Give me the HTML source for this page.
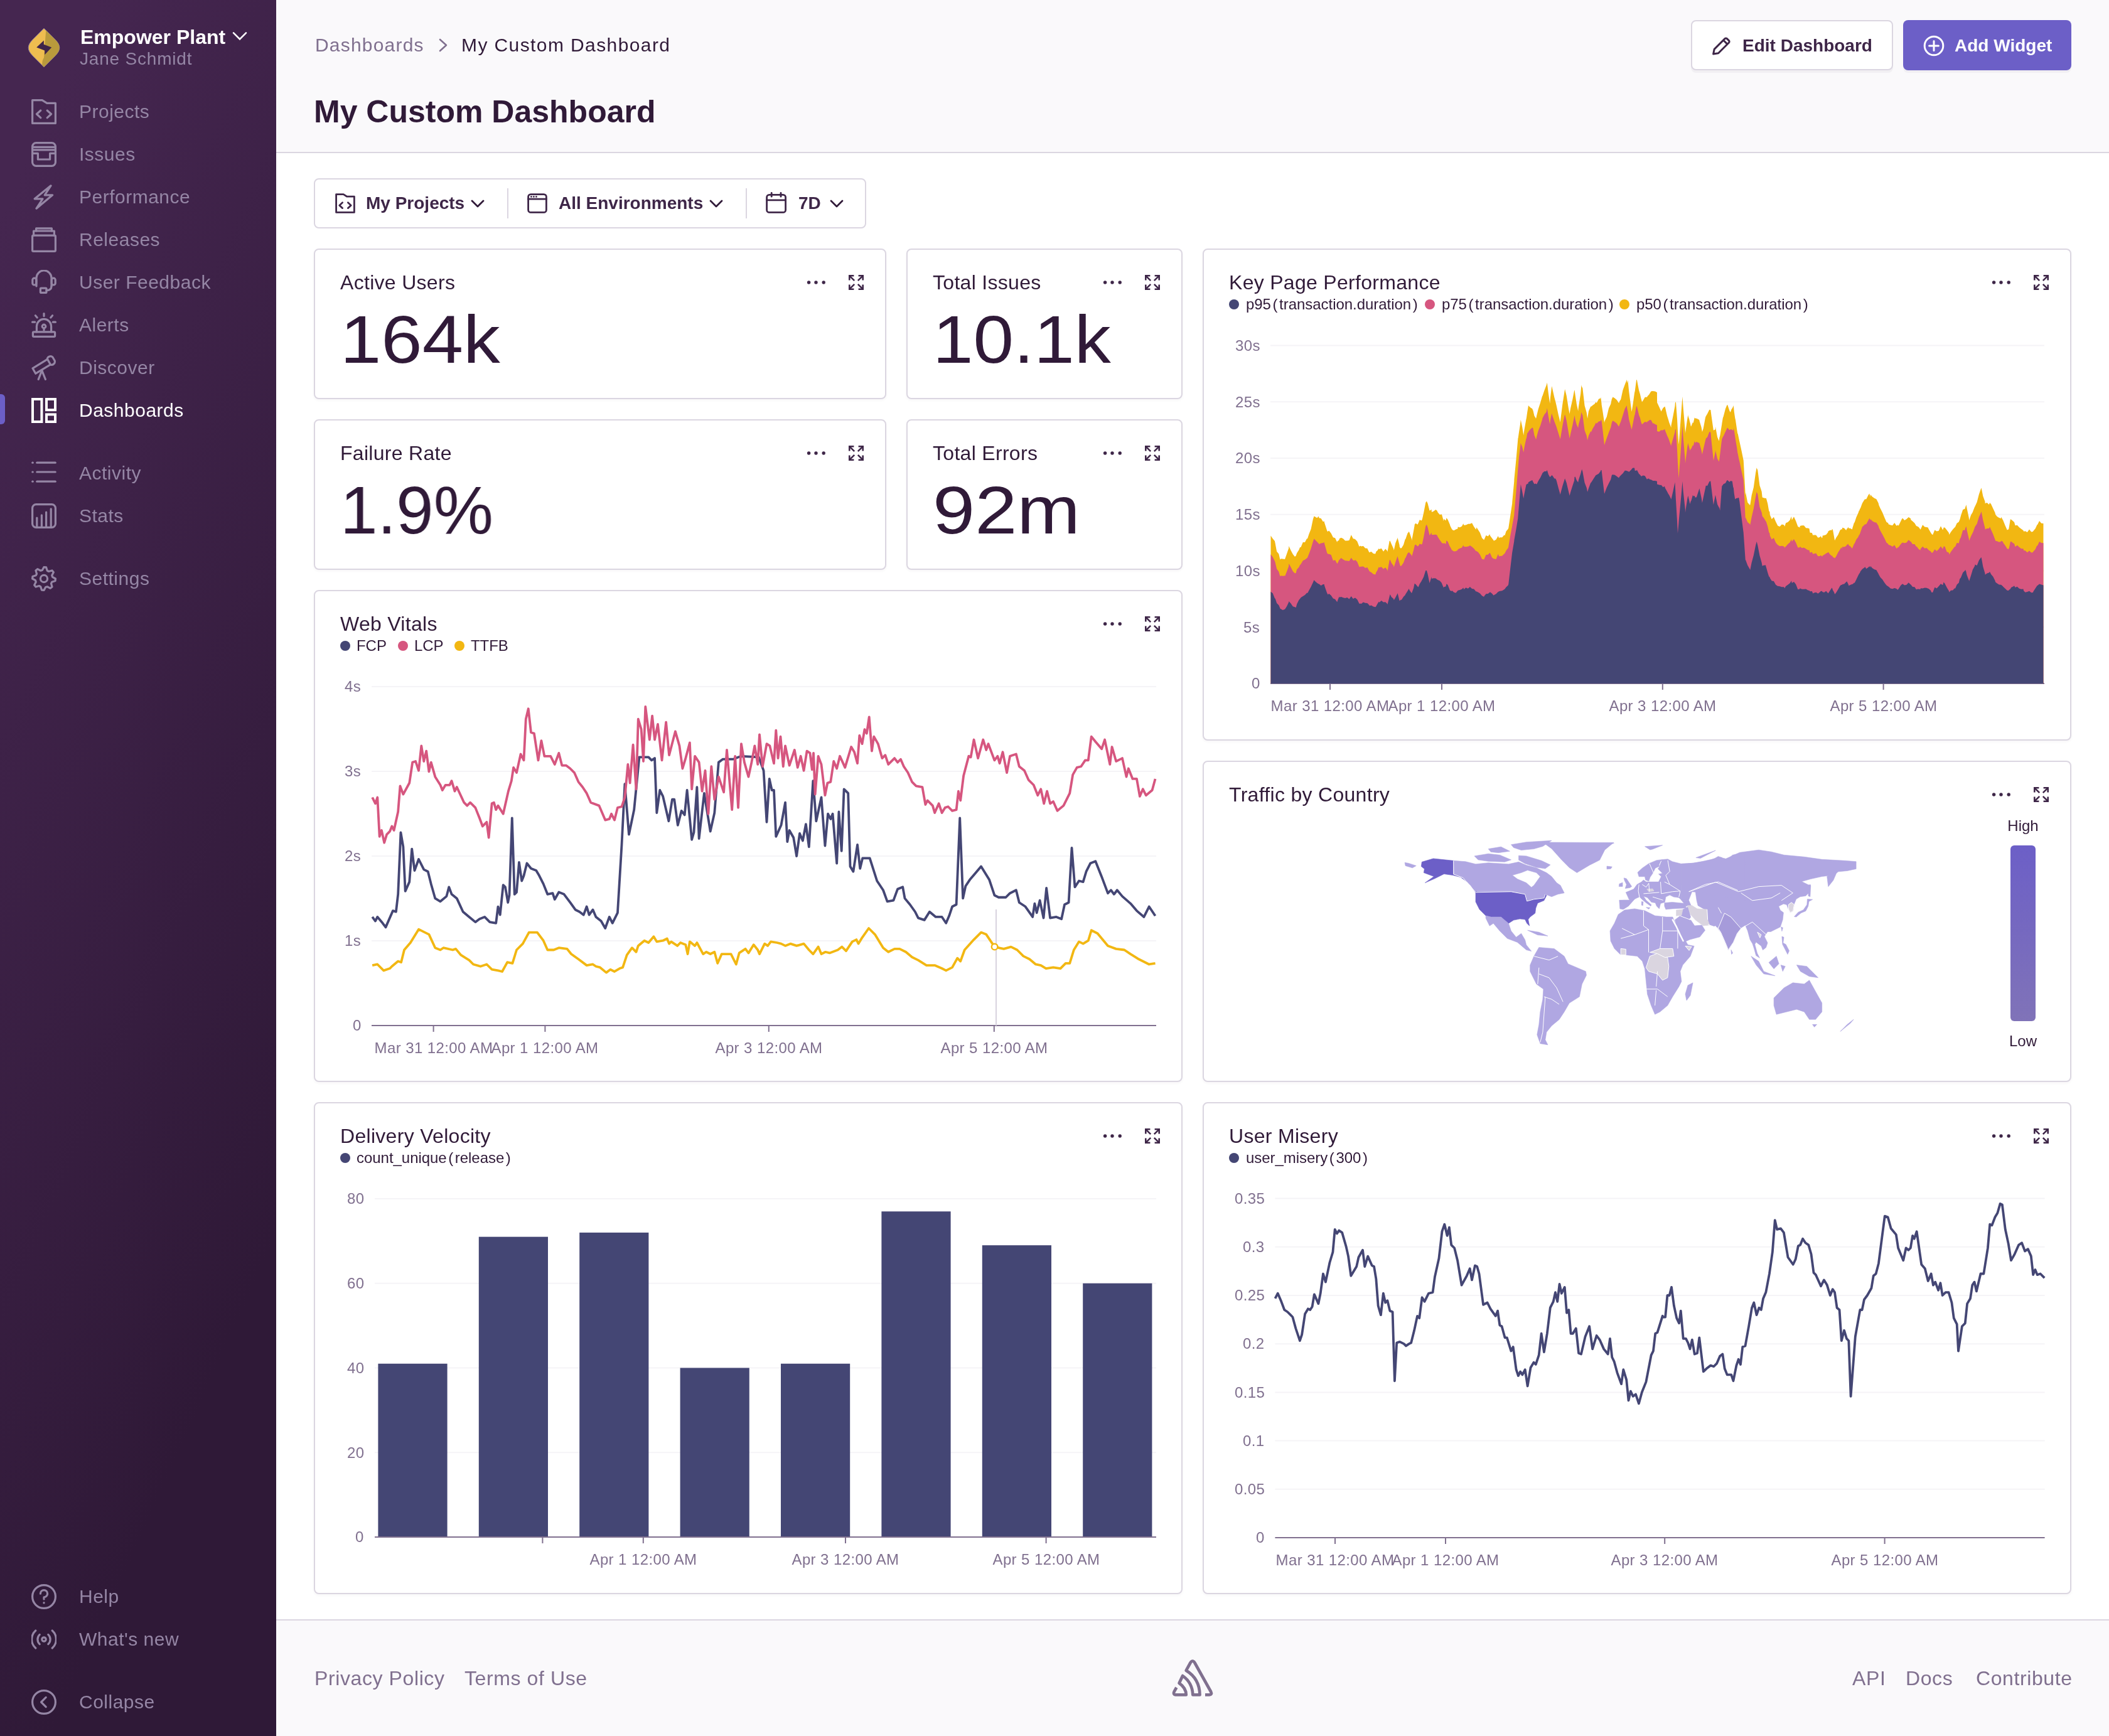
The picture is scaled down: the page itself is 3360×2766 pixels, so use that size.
<!DOCTYPE html>
<html><head><meta charset="utf-8"><style>
@media (min-width: 2000px) { html { zoom: 2; } }
html, body { margin:0; padding:0; }
body { width:1680px; height:1383px; position:relative; overflow:hidden; background:#FFFFFF; font-family:"Liberation Sans", sans-serif; -webkit-font-smoothing:antialiased; }
.t { will-change:transform; }
.t { position:absolute; white-space:nowrap; line-height:1; }
svg { display:block; }
</style></head><body>
<div style="position:absolute;left:0;top:0;width:220px;height:1383px;overflow:hidden;"><div style="position:absolute;left:0;top:0;width:220px;height:1800px;background:linear-gradient(294.17deg,#2f1937 35.57%,#452650 92.42%,#452650 92.42%);"></div></div>
<svg style="position:absolute;left:22px;top:22px;" width="26" height="32" viewBox="0 0 26 32"><defs><pattern id="dith" width="2" height="2" patternUnits="userSpaceOnUse"><rect width="2" height="2" fill="#6a4a5a"/><rect width="1" height="1" fill="#f0b72a"/><rect x="1" y="1" width="1" height="1" fill="#f0b72a"/></pattern></defs><path d="M13 0.6 L4 9.6 Q0.6 13 0.6 16 Q0.6 19 4 22.4 L13 31.4 L22 22.4 Q25.4 19 25.4 16 Q25.4 13 22 9.6 Z" fill="#EEBD50" stroke="#8a79a0" stroke-width="0.5"/><path d="M14.6 2.2 L22 9.6 Q25.4 13 25.4 16 Q25.4 19 22 22.4 L13 31.4 L11.6 30 Q11.4 26 13 24 Z" fill="#b99a3c"/><path d="M7.1 15.8 L12.9 10.3 V13.4 L19.1 15.8 L13.6 21.6 V18.3 Z" fill="#3f2449"/></svg>
<div class="t" style="left:63.90px;top:21.36px;font-size:16px;color:#FFFFFF;font-weight:700;">Empower Plant</div>
<svg style="position:absolute;left:185px;top:25px;" width="12" height="8" viewBox="0 0 12 8"><path d="M1 1.2 L6 6.2 L11 1.2" fill="none" stroke="#fff" stroke-width="1.3" stroke-linecap="round"/></svg>
<div class="t" style="left:63.50px;top:40.05px;font-size:14px;color:#9586A5;letter-spacing:0.4px;">Jane Schmidt</div>
<svg style="position:absolute;left:25px;top:79px;" width="20" height="20" viewBox="0 0 20 20"><g fill="none" stroke="#9586A5" stroke-width="1.6" stroke-linecap="round" stroke-linejoin="round"><path d="M0.8 0.8 H8.6 L12.4 3.2 H19.2 V19.2 H0.8 Z"/><path d="M7.4 9 L4.2 11.9 L7.4 14.8"/><path d="M12.6 9 L15.8 11.9 L12.6 14.8"/></g></svg>
<div class="t" style="left:63.00px;top:81.60px;font-size:15px;color:#9586A5;letter-spacing:0.25px;">Projects</div>
<svg style="position:absolute;left:25px;top:113px;" width="20" height="20" viewBox="0 0 20 20"><g fill="none" stroke="#9586A5" stroke-width="1.6" stroke-linecap="round" stroke-linejoin="round"><rect x="0.8" y="0.8" width="18.4" height="18.4" rx="3"/><path d="M1 4.2 H19"/><path d="M1 6.4 H19"/><path d="M1 9.2 H5.2 V14 H14.8 V9.2 H19"/></g></svg>
<div class="t" style="left:63.00px;top:115.60px;font-size:15px;color:#9586A5;letter-spacing:0.25px;">Issues</div>
<svg style="position:absolute;left:25px;top:147px;" width="20" height="20" viewBox="0 0 20 20"><g fill="none" stroke="#9586A5" stroke-width="1.6" stroke-linecap="round" stroke-linejoin="round"><path d="M15.5 0.9 L2.6 11.4 L9 11.4 L4 19.1 L16.8 8.4 L10.6 8.4 Z"/></g></svg>
<div class="t" style="left:63.00px;top:149.60px;font-size:15px;color:#9586A5;letter-spacing:0.25px;">Performance</div>
<svg style="position:absolute;left:25px;top:181px;" width="20" height="20" viewBox="0 0 20 20"><g fill="none" stroke="#9586A5" stroke-width="1.6" stroke-linecap="round" stroke-linejoin="round"><path d="M3.8 3 V0.9 H16.2 V3"/><path d="M1.8 6.6 V3 H18.2 V6.6"/><rect x="0.8" y="6.6" width="18.4" height="12.6" rx="0.8"/></g></svg>
<div class="t" style="left:63.00px;top:183.60px;font-size:15px;color:#9586A5;letter-spacing:0.25px;">Releases</div>
<svg style="position:absolute;left:25px;top:215px;" width="20" height="20" viewBox="0 0 20 20"><g fill="none" stroke="#9586A5" stroke-width="1.6" stroke-linecap="round" stroke-linejoin="round"><path d="M4 13 V6.5 A6 6 0 0 1 16 6.5 V13"/><rect x="0.9" y="6.6" width="3" height="5.4" rx="1.4"/><rect x="16.1" y="6.6" width="3" height="5.4" rx="1.4"/><path d="M16 13 Q16 16.3 12 16.3"/><rect x="7.2" y="14.6" width="4.8" height="3.6" rx="0.6"/></g></svg>
<div class="t" style="left:63.00px;top:217.60px;font-size:15px;color:#9586A5;letter-spacing:0.25px;">User Feedback</div>
<svg style="position:absolute;left:25px;top:249px;" width="20" height="20" viewBox="0 0 20 20"><g fill="none" stroke="#9586A5" stroke-width="1.6" stroke-linecap="round" stroke-linejoin="round"><rect x="1.2" y="15.4" width="17.6" height="3.8" rx="0.8"/><path d="M4.2 15.4 V11 A5.8 5.8 0 0 1 15.8 11 V15.4"/><circle cx="10" cy="11" r="1.4"/><path d="M10 12.4 V14"/><path d="M10 0.8 V2.8"/><path d="M3.2 2.4 L4.6 4"/><path d="M16.8 2.4 L15.4 4"/><path d="M0.8 7.6 H2.8"/><path d="M17.2 7.6 H19.2"/></g></svg>
<div class="t" style="left:63.00px;top:251.60px;font-size:15px;color:#9586A5;letter-spacing:0.25px;">Alerts</div>
<svg style="position:absolute;left:25px;top:283px;" width="20" height="20" viewBox="0 0 20 20"><g fill="none" stroke="#9586A5" stroke-width="1.6" stroke-linecap="round" stroke-linejoin="round"><path d="M1 10.4 L12.8 3.2 L15.2 7.4 L3.4 14.6 Z"/><path d="M12.6 3 A2.6 2.6 0 0 1 17 1.6 L18.6 4.4 A2.6 2.6 0 0 1 15.6 7.6"/><path d="M8.4 12.2 L5.6 19.2"/><path d="M8.4 12.2 L11.2 19.2"/></g></svg>
<div class="t" style="left:63.00px;top:285.60px;font-size:15px;color:#9586A5;letter-spacing:0.25px;">Discover</div>
<svg style="position:absolute;left:25px;top:317px;" width="20" height="20" viewBox="0 0 20 20"><g fill="none" stroke="#FFFFFF" stroke-width="2"><rect x="1" y="1" width="7.2" height="18"/><rect x="12" y="1" width="7" height="8.6"/><rect x="12" y="13.2" width="7" height="5.8"/></g></svg>
<div class="t" style="left:63.00px;top:319.60px;font-size:15px;color:#FFFFFF;letter-spacing:0.25px;">Dashboards</div>
<svg style="position:absolute;left:25px;top:367px;" width="20" height="20" viewBox="0 0 20 20"><g fill="none" stroke="#9586A5" stroke-width="1.6" stroke-linecap="round" stroke-linejoin="round"><path d="M0.9 1.6 H1.1"/><path d="M4.4 1.6 H19.1"/><path d="M0.9 9 H1.1"/><path d="M4.4 9 H19.1"/><path d="M0.9 16.6 H1.1"/><path d="M4.4 16.6 H19.1"/></g></svg>
<div class="t" style="left:63.00px;top:369.60px;font-size:15px;color:#9586A5;letter-spacing:0.25px;">Activity</div>
<svg style="position:absolute;left:25px;top:401px;" width="20" height="20" viewBox="0 0 20 20"><g fill="none" stroke="#9586A5" stroke-width="1.6" stroke-linecap="round" stroke-linejoin="round"><rect x="0.8" y="0.8" width="18.4" height="18.4" rx="3"/><path d="M4.4 18.6 V11.6"/><path d="M8.2 18.6 V9.4"/><path d="M11.8 18.6 V7"/><path d="M15.6 18.6 V4.4"/></g></svg>
<div class="t" style="left:63.00px;top:403.60px;font-size:15px;color:#9586A5;letter-spacing:0.25px;">Stats</div>
<svg style="position:absolute;left:25px;top:451px;" width="20" height="20" viewBox="0 0 20 20"><g fill="none" stroke="#9586A5" stroke-width="1.6" stroke-linecap="round" stroke-linejoin="round"><path d="M10.00 0.80 L11.79 0.98 L12.64 3.63 L13.83 4.26 L16.51 3.49 L17.65 4.89 L16.37 7.36 L16.77 8.65 L19.20 10.00 L19.02 11.79 L16.37 12.64 L15.74 13.83 L16.51 16.51 L15.11 17.65 L12.64 16.37 L11.35 16.77 L10.00 19.20 L8.21 19.02 L7.36 16.37 L6.17 15.74 L3.49 16.51 L2.35 15.11 L3.63 12.64 L3.23 11.35 L0.80 10.00 L0.98 8.21 L3.63 7.36 L4.26 6.17 L3.49 3.49 L4.89 2.35 L7.36 3.63 L8.65 3.23 Z"/><circle cx="10" cy="10" r="2.8"/></g></svg>
<div class="t" style="left:63.00px;top:453.60px;font-size:15px;color:#9586A5;letter-spacing:0.25px;">Settings</div>
<svg style="position:absolute;left:25px;top:1262px;" width="20" height="20" viewBox="0 0 20 20"><g fill="none" stroke="#9586A5" stroke-width="1.6" stroke-linecap="round" stroke-linejoin="round"><circle cx="10" cy="10" r="9.2"/><path d="M7.2 7.6 A2.8 2.8 0 1 1 10 10.4 V12"/><path d="M10 14.8 V15"/></g></svg>
<div class="t" style="left:63.00px;top:1264.60px;font-size:15px;color:#9586A5;letter-spacing:0.25px;">Help</div>
<svg style="position:absolute;left:25px;top:1296px;" width="20" height="20" viewBox="0 0 20 20"><g fill="none" stroke="#9586A5" stroke-width="1.6" stroke-linecap="round" stroke-linejoin="round"><circle cx="10" cy="10" r="1.6"/><path d="M6.6 6.2 A5.2 5.2 0 0 0 6.6 13.8"/><path d="M13.4 6.2 A5.2 5.2 0 0 1 13.4 13.8"/><path d="M3.4 3 A9.4 9.4 0 0 0 3.4 17"/><path d="M16.6 3 A9.4 9.4 0 0 1 16.6 17"/></g></svg>
<div class="t" style="left:63.00px;top:1298.60px;font-size:15px;color:#9586A5;letter-spacing:0.25px;">What's new</div>
<svg style="position:absolute;left:25px;top:1346px;" width="20" height="20" viewBox="0 0 20 20"><g fill="none" stroke="#9586A5" stroke-width="1.6" stroke-linecap="round" stroke-linejoin="round"><circle cx="10" cy="10" r="9.2"/><path d="M11.6 6.2 L7.8 10 L11.6 13.8"/></g></svg>
<div class="t" style="left:63.00px;top:1348.60px;font-size:15px;color:#9586A5;letter-spacing:0.25px;">Collapse</div>
<div style="position:absolute;left:0px;top:314px;width:4px;height:24px;background:#6C5FC7;border-radius:0 3px 3px 0;"></div>
<div style="position:absolute;left:220px;top:0px;width:1460px;height:121px;background:#FAF9FB;border-bottom:1px solid #DBD6E1;"></div>
<div class="t" style="left:251.00px;top:28.60px;font-size:15px;color:#80708F;letter-spacing:0.6px;">Dashboards</div>
<svg style="position:absolute;left:348px;top:30px;" width="10" height="12" viewBox="0 0 10 12"><path d="M2.5 1.5 L7.5 6 L2.5 10.5" fill="none" stroke="#80708F" stroke-width="1.3" stroke-linecap="round" stroke-linejoin="round"/></svg>
<div class="t" style="left:367.60px;top:28.60px;font-size:15px;color:#301A38;letter-spacing:0.7px;">My Custom Dashboard</div>
<div class="t" style="left:249.90px;top:76.34px;font-size:25px;color:#301A38;font-weight:700;">My Custom Dashboard</div>
<div style="position:absolute;left:1347px;top:16px;width:159px;height:38px;background:#fff;border:1px solid #DBD6E1;border-radius:4px;box-shadow:0 2px 0 rgba(37,11,54,0.04);"></div>
<svg style="position:absolute;left:1363px;top:28px;" width="17" height="17" viewBox="0 0 17 17"><path d="M1.8 15 L2.6 11.2 L11 2.8 A1.2 1.2 0 0 1 12.7 2.8 L14.2 4.3 A1.2 1.2 0 0 1 14.2 6 L5.8 14.4 Z M9.8 4 L13 7.2" fill="none" stroke="#3E2648" stroke-width="1.5" stroke-linejoin="round"/></svg>
<div class="t" style="left:1388.00px;top:29.55px;font-size:14px;color:#3E2648;font-weight:700;">Edit Dashboard</div>
<div style="position:absolute;left:1516px;top:16px;width:134px;height:40px;background:#6C5FC7;border-radius:4px;box-shadow:0 2px 0 rgba(37,11,54,0.04);"></div>
<svg style="position:absolute;left:1532px;top:28px;" width="17" height="17" viewBox="0 0 17 17"><circle cx="8.5" cy="8.5" r="7.4" fill="none" stroke="#fff" stroke-width="1.5"/><path d="M8.5 4.8 V12.2 M4.8 8.5 H12.2" stroke="#fff" stroke-width="1.5" stroke-linecap="round"/></svg>
<div class="t" style="left:1557.00px;top:29.55px;font-size:14px;color:#FFFFFF;font-weight:700;">Add Widget</div>
<div style="position:absolute;left:250px;top:142px;width:438px;height:38px;background:#fff;border:1px solid #DBD6E1;border-radius:4px;"></div>
<svg style="position:absolute;left:267px;top:154px;" width="16" height="16" viewBox="0 0 16 16"><g fill="none" stroke="#3E2648" stroke-width="1.4" stroke-linejoin="round" stroke-linecap="round"><path d="M0.8 0.8 H6.6 L9.4 2.6 H15.2 V15.2 H0.8 Z"/><path d="M5.8 7.4 L3.4 9.6 L5.8 11.8"/><path d="M10.2 7.4 L12.6 9.6 L10.2 11.8"/></g></svg>
<div class="t" style="left:291.50px;top:155.15px;font-size:14px;color:#3E2648;font-weight:700;">My Projects</div>
<svg style="position:absolute;left:375px;top:159px;" width="11" height="7" viewBox="0 0 11 7"><path d="M1 1 L5.5 5.5 L10 1" fill="none" stroke="#301A38" stroke-width="1.4" stroke-linecap="round" stroke-linejoin="round"/></svg>
<div style="position:absolute;left:404px;top:150px;width:1px;height:24px;background:#DBD6E1;"></div>
<svg style="position:absolute;left:420px;top:154px;" width="16" height="16" viewBox="0 0 16 16"><g fill="none" stroke="#3E2648" stroke-width="1.4" stroke-linejoin="round" stroke-linecap="round"><rect x="0.8" y="0.8" width="14.4" height="14.4" rx="2"/><path d="M0.8 4.6 H15.2"/></g><g fill="#3E2648"><circle cx="3.2" cy="2.7" r="0.7"/><circle cx="5.2" cy="2.7" r="0.7"/><circle cx="7.2" cy="2.7" r="0.7"/></g></svg>
<div class="t" style="left:445.00px;top:155.15px;font-size:14px;color:#3E2648;font-weight:700;">All Environments</div>
<svg style="position:absolute;left:565px;top:159px;" width="11" height="7" viewBox="0 0 11 7"><path d="M1 1 L5.5 5.5 L10 1" fill="none" stroke="#301A38" stroke-width="1.4" stroke-linecap="round" stroke-linejoin="round"/></svg>
<div style="position:absolute;left:594px;top:150px;width:1px;height:24px;background:#DBD6E1;"></div>
<svg style="position:absolute;left:610px;top:153px;" width="17" height="17" viewBox="0 0 17 17"><g fill="none" stroke="#3E2648" stroke-width="1.4" stroke-linejoin="round" stroke-linecap="round"><rect x="0.8" y="2.2" width="15" height="14" rx="2"/><path d="M0.8 6.4 H15.8"/><path d="M4.6 0.7 V3.6"/><path d="M12 0.7 V3.6"/></g></svg>
<div class="t" style="left:636.00px;top:155.15px;font-size:14px;color:#3E2648;font-weight:700;">7D</div>
<svg style="position:absolute;left:661px;top:159px;" width="11" height="7" viewBox="0 0 11 7"><path d="M1 1 L5.5 5.5 L10 1" fill="none" stroke="#301A38" stroke-width="1.4" stroke-linecap="round" stroke-linejoin="round"/></svg>
<div style="position:absolute;left:250px;top:198px;width:454px;height:118px;background:#fff;border:1px solid #DBD6E1;border-radius:4px;box-shadow:0 1px 2px rgba(43,29,56,0.04);"></div>
<div class="t" style="left:271.00px;top:216.96px;font-size:16px;color:#301A38;letter-spacing:0.15px;">Active Users</div>
<svg style="position:absolute;left:643px;top:223px;overflow:visible;" width="14" height="4" viewBox="0 0 14 4"><g fill="#3E2648"><circle cx="0.6" cy="2" r="1.35" transform="translate(0.7 0)"/><circle cx="7" cy="2" r="1.35"/><circle cx="13.7" cy="2" r="1.35" transform="translate(-0.6 0)"/></g></svg>
<svg style="position:absolute;left:676px;top:219px;" width="12" height="12" viewBox="0 0 12 12"><g fill="none" stroke="#3E2648" stroke-width="1.3" stroke-linecap="butt" stroke-linejoin="miter"><path d="M0.65 4.2 V0.65 H4.2"/><path d="M0.9 0.9 L4.6 4.6"/><path d="M7.8 0.65 H11.35 V4.2"/><path d="M11.1 0.9 L7.4 4.6"/><path d="M0.65 7.8 V11.35 H4.2"/><path d="M0.9 11.1 L4.6 7.4"/><path d="M7.8 11.35 H11.35 V7.8"/><path d="M11.1 11.1 L7.4 7.4"/></g></svg>
<div style="position:absolute;left:722px;top:198px;width:218px;height:118px;background:#fff;border:1px solid #DBD6E1;border-radius:4px;box-shadow:0 1px 2px rgba(43,29,56,0.04);"></div>
<div class="t" style="left:743.00px;top:216.96px;font-size:16px;color:#301A38;letter-spacing:0.15px;">Total Issues</div>
<svg style="position:absolute;left:879px;top:223px;overflow:visible;" width="14" height="4" viewBox="0 0 14 4"><g fill="#3E2648"><circle cx="0.6" cy="2" r="1.35" transform="translate(0.7 0)"/><circle cx="7" cy="2" r="1.35"/><circle cx="13.7" cy="2" r="1.35" transform="translate(-0.6 0)"/></g></svg>
<svg style="position:absolute;left:912px;top:219px;" width="12" height="12" viewBox="0 0 12 12"><g fill="none" stroke="#3E2648" stroke-width="1.3" stroke-linecap="butt" stroke-linejoin="miter"><path d="M0.65 4.2 V0.65 H4.2"/><path d="M0.9 0.9 L4.6 4.6"/><path d="M7.8 0.65 H11.35 V4.2"/><path d="M11.1 0.9 L7.4 4.6"/><path d="M0.65 7.8 V11.35 H4.2"/><path d="M0.9 11.1 L4.6 7.4"/><path d="M7.8 11.35 H11.35 V7.8"/><path d="M11.1 11.1 L7.4 7.4"/></g></svg>
<div style="position:absolute;left:250px;top:334px;width:454px;height:118px;background:#fff;border:1px solid #DBD6E1;border-radius:4px;box-shadow:0 1px 2px rgba(43,29,56,0.04);"></div>
<div class="t" style="left:271.00px;top:352.96px;font-size:16px;color:#301A38;letter-spacing:0.15px;">Failure Rate</div>
<svg style="position:absolute;left:643px;top:359px;overflow:visible;" width="14" height="4" viewBox="0 0 14 4"><g fill="#3E2648"><circle cx="0.6" cy="2" r="1.35" transform="translate(0.7 0)"/><circle cx="7" cy="2" r="1.35"/><circle cx="13.7" cy="2" r="1.35" transform="translate(-0.6 0)"/></g></svg>
<svg style="position:absolute;left:676px;top:355px;" width="12" height="12" viewBox="0 0 12 12"><g fill="none" stroke="#3E2648" stroke-width="1.3" stroke-linecap="butt" stroke-linejoin="miter"><path d="M0.65 4.2 V0.65 H4.2"/><path d="M0.9 0.9 L4.6 4.6"/><path d="M7.8 0.65 H11.35 V4.2"/><path d="M11.1 0.9 L7.4 4.6"/><path d="M0.65 7.8 V11.35 H4.2"/><path d="M0.9 11.1 L4.6 7.4"/><path d="M7.8 11.35 H11.35 V7.8"/><path d="M11.1 11.1 L7.4 7.4"/></g></svg>
<div style="position:absolute;left:722px;top:334px;width:218px;height:118px;background:#fff;border:1px solid #DBD6E1;border-radius:4px;box-shadow:0 1px 2px rgba(43,29,56,0.04);"></div>
<div class="t" style="left:743.00px;top:352.96px;font-size:16px;color:#301A38;letter-spacing:0.15px;">Total Errors</div>
<svg style="position:absolute;left:879px;top:359px;overflow:visible;" width="14" height="4" viewBox="0 0 14 4"><g fill="#3E2648"><circle cx="0.6" cy="2" r="1.35" transform="translate(0.7 0)"/><circle cx="7" cy="2" r="1.35"/><circle cx="13.7" cy="2" r="1.35" transform="translate(-0.6 0)"/></g></svg>
<svg style="position:absolute;left:912px;top:355px;" width="12" height="12" viewBox="0 0 12 12"><g fill="none" stroke="#3E2648" stroke-width="1.3" stroke-linecap="butt" stroke-linejoin="miter"><path d="M0.65 4.2 V0.65 H4.2"/><path d="M0.9 0.9 L4.6 4.6"/><path d="M7.8 0.65 H11.35 V4.2"/><path d="M11.1 0.9 L7.4 4.6"/><path d="M0.65 7.8 V11.35 H4.2"/><path d="M0.9 11.1 L4.6 7.4"/><path d="M7.8 11.35 H11.35 V7.8"/><path d="M11.1 11.1 L7.4 7.4"/></g></svg>
<div style="position:absolute;left:958px;top:198px;width:690px;height:390px;background:#fff;border:1px solid #DBD6E1;border-radius:4px;box-shadow:0 1px 2px rgba(43,29,56,0.04);"></div>
<div class="t" style="left:979.00px;top:216.96px;font-size:16px;color:#301A38;letter-spacing:0.15px;">Key Page Performance</div>
<svg style="position:absolute;left:1587px;top:223px;overflow:visible;" width="14" height="4" viewBox="0 0 14 4"><g fill="#3E2648"><circle cx="0.6" cy="2" r="1.35" transform="translate(0.7 0)"/><circle cx="7" cy="2" r="1.35"/><circle cx="13.7" cy="2" r="1.35" transform="translate(-0.6 0)"/></g></svg>
<svg style="position:absolute;left:1620px;top:219px;" width="12" height="12" viewBox="0 0 12 12"><g fill="none" stroke="#3E2648" stroke-width="1.3" stroke-linecap="butt" stroke-linejoin="miter"><path d="M0.65 4.2 V0.65 H4.2"/><path d="M0.9 0.9 L4.6 4.6"/><path d="M7.8 0.65 H11.35 V4.2"/><path d="M11.1 0.9 L7.4 4.6"/><path d="M0.65 7.8 V11.35 H4.2"/><path d="M0.9 11.1 L4.6 7.4"/><path d="M7.8 11.35 H11.35 V7.8"/><path d="M11.1 11.1 L7.4 7.4"/></g></svg>
<div style="position:absolute;left:250px;top:470px;width:690px;height:390px;background:#fff;border:1px solid #DBD6E1;border-radius:4px;box-shadow:0 1px 2px rgba(43,29,56,0.04);"></div>
<div class="t" style="left:271.00px;top:488.96px;font-size:16px;color:#301A38;letter-spacing:0.15px;">Web Vitals</div>
<svg style="position:absolute;left:879px;top:495px;overflow:visible;" width="14" height="4" viewBox="0 0 14 4"><g fill="#3E2648"><circle cx="0.6" cy="2" r="1.35" transform="translate(0.7 0)"/><circle cx="7" cy="2" r="1.35"/><circle cx="13.7" cy="2" r="1.35" transform="translate(-0.6 0)"/></g></svg>
<svg style="position:absolute;left:912px;top:491px;" width="12" height="12" viewBox="0 0 12 12"><g fill="none" stroke="#3E2648" stroke-width="1.3" stroke-linecap="butt" stroke-linejoin="miter"><path d="M0.65 4.2 V0.65 H4.2"/><path d="M0.9 0.9 L4.6 4.6"/><path d="M7.8 0.65 H11.35 V4.2"/><path d="M11.1 0.9 L7.4 4.6"/><path d="M0.65 7.8 V11.35 H4.2"/><path d="M0.9 11.1 L4.6 7.4"/><path d="M7.8 11.35 H11.35 V7.8"/><path d="M11.1 11.1 L7.4 7.4"/></g></svg>
<div style="position:absolute;left:958px;top:606px;width:690px;height:254px;background:#fff;border:1px solid #DBD6E1;border-radius:4px;box-shadow:0 1px 2px rgba(43,29,56,0.04);"></div>
<div class="t" style="left:979.00px;top:624.96px;font-size:16px;color:#301A38;letter-spacing:0.15px;">Traffic by Country</div>
<svg style="position:absolute;left:1587px;top:631px;overflow:visible;" width="14" height="4" viewBox="0 0 14 4"><g fill="#3E2648"><circle cx="0.6" cy="2" r="1.35" transform="translate(0.7 0)"/><circle cx="7" cy="2" r="1.35"/><circle cx="13.7" cy="2" r="1.35" transform="translate(-0.6 0)"/></g></svg>
<svg style="position:absolute;left:1620px;top:627px;" width="12" height="12" viewBox="0 0 12 12"><g fill="none" stroke="#3E2648" stroke-width="1.3" stroke-linecap="butt" stroke-linejoin="miter"><path d="M0.65 4.2 V0.65 H4.2"/><path d="M0.9 0.9 L4.6 4.6"/><path d="M7.8 0.65 H11.35 V4.2"/><path d="M11.1 0.9 L7.4 4.6"/><path d="M0.65 7.8 V11.35 H4.2"/><path d="M0.9 11.1 L4.6 7.4"/><path d="M7.8 11.35 H11.35 V7.8"/><path d="M11.1 11.1 L7.4 7.4"/></g></svg>
<div style="position:absolute;left:250px;top:878px;width:690px;height:390px;background:#fff;border:1px solid #DBD6E1;border-radius:4px;box-shadow:0 1px 2px rgba(43,29,56,0.04);"></div>
<div class="t" style="left:271.00px;top:896.96px;font-size:16px;color:#301A38;letter-spacing:0.15px;">Delivery Velocity</div>
<svg style="position:absolute;left:879px;top:903px;overflow:visible;" width="14" height="4" viewBox="0 0 14 4"><g fill="#3E2648"><circle cx="0.6" cy="2" r="1.35" transform="translate(0.7 0)"/><circle cx="7" cy="2" r="1.35"/><circle cx="13.7" cy="2" r="1.35" transform="translate(-0.6 0)"/></g></svg>
<svg style="position:absolute;left:912px;top:899px;" width="12" height="12" viewBox="0 0 12 12"><g fill="none" stroke="#3E2648" stroke-width="1.3" stroke-linecap="butt" stroke-linejoin="miter"><path d="M0.65 4.2 V0.65 H4.2"/><path d="M0.9 0.9 L4.6 4.6"/><path d="M7.8 0.65 H11.35 V4.2"/><path d="M11.1 0.9 L7.4 4.6"/><path d="M0.65 7.8 V11.35 H4.2"/><path d="M0.9 11.1 L4.6 7.4"/><path d="M7.8 11.35 H11.35 V7.8"/><path d="M11.1 11.1 L7.4 7.4"/></g></svg>
<div style="position:absolute;left:958px;top:878px;width:690px;height:390px;background:#fff;border:1px solid #DBD6E1;border-radius:4px;box-shadow:0 1px 2px rgba(43,29,56,0.04);"></div>
<div class="t" style="left:979.00px;top:896.96px;font-size:16px;color:#301A38;letter-spacing:0.15px;">User Misery</div>
<svg style="position:absolute;left:1587px;top:903px;overflow:visible;" width="14" height="4" viewBox="0 0 14 4"><g fill="#3E2648"><circle cx="0.6" cy="2" r="1.35" transform="translate(0.7 0)"/><circle cx="7" cy="2" r="1.35"/><circle cx="13.7" cy="2" r="1.35" transform="translate(-0.6 0)"/></g></svg>
<svg style="position:absolute;left:1620px;top:899px;" width="12" height="12" viewBox="0 0 12 12"><g fill="none" stroke="#3E2648" stroke-width="1.3" stroke-linecap="butt" stroke-linejoin="miter"><path d="M0.65 4.2 V0.65 H4.2"/><path d="M0.9 0.9 L4.6 4.6"/><path d="M7.8 0.65 H11.35 V4.2"/><path d="M11.1 0.9 L7.4 4.6"/><path d="M0.65 7.8 V11.35 H4.2"/><path d="M0.9 11.1 L4.6 7.4"/><path d="M7.8 11.35 H11.35 V7.8"/><path d="M11.1 11.1 L7.4 7.4"/></g></svg>
<div class="t" style="left:271.00px;top:243.29px;font-size:54px;color:#301A38;transform:scaleX(1.088);transform-origin:0 0;">164k</div>
<div class="t" style="left:743.00px;top:243.29px;font-size:54px;color:#301A38;transform:scaleX(1.074);transform-origin:0 0;">10.1k</div>
<div class="t" style="left:271.00px;top:379.29px;font-size:54px;color:#301A38;transform:scaleX(0.99);transform-origin:0 0;">1.9%</div>
<div class="t" style="left:743.00px;top:379.29px;font-size:54px;color:#301A38;transform:scaleX(1.118);transform-origin:0 0;">92m</div>
<div style="position:absolute;left:979px;top:238.5px;width:8px;height:8px;background:#444674;border-radius:50%;"></div>
<div class="t" style="left:992.30px;top:236.54px;font-size:12px;color:#301A38;letter-spacing:-0.02px;">p95<span style="margin:0 1.3px">(</span>transaction.duration<span style="margin:0 1.3px">)</span></div>
<div style="position:absolute;left:1135px;top:238.5px;width:8px;height:8px;background:#D6567F;border-radius:50%;"></div>
<div class="t" style="left:1148.50px;top:236.54px;font-size:12px;color:#301A38;letter-spacing:-0.02px;">p75<span style="margin:0 1.3px">(</span>transaction.duration<span style="margin:0 1.3px">)</span></div>
<div style="position:absolute;left:1290px;top:238.5px;width:8px;height:8px;background:#F2B712;border-radius:50%;"></div>
<div class="t" style="left:1303.50px;top:236.54px;font-size:12px;color:#301A38;letter-spacing:-0.02px;">p50<span style="margin:0 1.3px">(</span>transaction.duration<span style="margin:0 1.3px">)</span></div>
<div class="t" style="right:676.30px;top:269.44px;font-size:12px;color:#80708F;letter-spacing:0.2px;">30s</div>
<div class="t" style="right:676.30px;top:314.31px;font-size:12px;color:#80708F;letter-spacing:0.2px;">25s</div>
<div class="t" style="right:676.30px;top:359.18px;font-size:12px;color:#80708F;letter-spacing:0.2px;">20s</div>
<div class="t" style="right:676.30px;top:404.04px;font-size:12px;color:#80708F;letter-spacing:0.2px;">15s</div>
<div class="t" style="right:676.30px;top:448.91px;font-size:12px;color:#80708F;letter-spacing:0.2px;">10s</div>
<div class="t" style="right:676.30px;top:493.78px;font-size:12px;color:#80708F;letter-spacing:0.2px;">5s</div>
<div class="t" style="right:676.30px;top:538.64px;font-size:12px;color:#80708F;letter-spacing:0.2px;">0</div>
<div class="t" style="left:759.50px;width:600px;text-align:center;top:556.74px;font-size:12px;color:#80708F;letter-spacing:0.2px;">Mar 31 12:00 AM</div>
<div class="t" style="left:848.50px;width:600px;text-align:center;top:556.74px;font-size:12px;color:#80708F;letter-spacing:0.2px;">Apr 1 12:00 AM</div>
<div class="t" style="left:1024.40px;width:600px;text-align:center;top:556.74px;font-size:12px;color:#80708F;letter-spacing:0.2px;">Apr 3 12:00 AM</div>
<div class="t" style="left:1200.30px;width:600px;text-align:center;top:556.74px;font-size:12px;color:#80708F;letter-spacing:0.2px;">Apr 5 12:00 AM</div>
<svg style="position:absolute;left:0px;top:0px;pointer-events:none;" width="1680" height="1383" viewBox="0 0 1680 1383"><path d="M1012.00 275.30 H1628.50" stroke="#F5F4F7" stroke-width="1"/><path d="M1012.00 320.17 H1628.50" stroke="#F5F4F7" stroke-width="1"/><path d="M1012.00 365.03 H1628.50" stroke="#F5F4F7" stroke-width="1"/><path d="M1012.00 409.90 H1628.50" stroke="#F5F4F7" stroke-width="1"/><path d="M1012.00 454.77 H1628.50" stroke="#F5F4F7" stroke-width="1"/><path d="M1012.00 499.63 H1628.50" stroke="#F5F4F7" stroke-width="1"/><path d="M1012.00 544.50 H1628.50" stroke="#80708F" stroke-width="1"/><path d="M1059.50 544.50 V549.50" stroke="#80708F" stroke-width="1"/><path d="M1148.50 544.50 V549.50" stroke="#80708F" stroke-width="1"/><path d="M1324.40 544.50 V549.50" stroke="#80708F" stroke-width="1"/><path d="M1500.30 544.50 V549.50" stroke="#80708F" stroke-width="1"/><path d="M1012.25 426.27 L1012.25 426.04 L1012.25 426.68 L1012.25 426.79 L1013.85 429.12 L1015.45 430.97 L1015.99 433.58 L1015.99 433.73 L1015.99 433.77 L1017.05 439.42 L1018.66 441.21 L1019.73 445.85 L1019.73 445.44 L1019.73 445.86 L1020.26 445.17 L1021.86 445.25 L1023.47 445.47 L1023.48 445.63 L1023.48 446.21 L1023.48 445.62 L1025.07 441.15 L1026.47 437.05 L1026.47 437.20 L1026.47 437.84 L1026.67 435.05 L1028.27 438.48 L1029.88 441.49 L1031.48 443.51 L1032.46 442.68 L1032.46 443.19 L1032.46 442.43 L1033.08 440.58 L1034.69 438.12 L1035.46 436.12 L1035.46 436.10 L1035.46 436.09 L1036.29 435.90 L1037.89 432.04 L1039.49 432.02 L1041.10 428.93 L1041.45 429.39 L1041.45 429.49 L1041.45 429.35 L1042.70 425.51 L1044.30 421.55 L1045.91 413.72 L1046.69 411.38 L1046.69 411.25 L1046.69 411.19 L1047.51 411.60 L1049.11 412.64 L1050.43 411.26 L1050.43 410.84 L1050.43 411.18 L1050.71 412.62 L1052.32 412.99 L1053.92 415.57 L1054.92 415.26 L1054.92 415.71 L1054.92 416.00 L1055.52 417.87 L1057.12 422.82 L1057.92 423.72 L1057.92 423.35 L1057.92 423.18 L1058.73 422.82 L1060.33 424.84 L1061.93 428.13 L1063.54 428.67 L1065.14 432.01 L1065.41 430.61 L1065.41 430.90 L1065.41 431.12 L1066.74 430.28 L1066.90 429.38 L1066.90 429.48 L1066.90 429.13 L1068.34 428.37 L1069.95 429.11 L1071.55 430.69 L1073.15 430.74 L1074.76 430.52 L1076.36 426.12 L1077.96 429.26 L1078.88 429.14 L1078.88 429.58 L1078.88 429.48 L1079.56 429.60 L1081.17 431.40 L1082.77 435.49 L1083.38 434.87 L1083.38 435.19 L1083.38 434.75 L1084.37 435.28 L1085.98 434.97 L1087.58 436.69 L1089.18 436.83 L1090.78 440.29 L1090.86 440.11 L1090.86 439.62 L1090.86 440.05 L1092.39 439.53 L1093.99 440.97 L1095.59 441.29 L1096.10 439.84 L1096.10 439.90 L1096.10 439.56 L1097.20 438.63 L1098.35 436.88 L1098.35 436.66 L1098.35 437.18 L1098.80 437.47 L1100.40 436.89 L1102.00 439.36 L1103.61 437.30 L1105.09 438.82 L1105.09 439.34 L1105.09 439.17 L1105.21 439.79 L1106.81 431.11 L1107.33 430.72 L1107.33 430.86 L1107.33 430.86 L1108.42 433.55 L1110.02 436.96 L1110.33 438.30 L1110.33 438.10 L1110.33 438.47 L1111.62 432.65 L1113.22 428.77 L1113.32 427.77 L1113.32 428.53 L1113.32 428.53 L1114.82 434.36 L1114.83 435.36 L1115.57 436.91 L1115.57 436.79 L1116.43 436.68 L1118.03 433.95 L1119.31 429.63 L1119.63 429.49 L1121.24 424.83 L1122.31 423.62 L1122.31 423.49 L1122.31 423.28 L1122.84 424.51 L1124.44 429.25 L1124.56 430.39 L1124.56 430.82 L1124.56 430.86 L1126.05 422.93 L1126.80 418.72 L1126.80 418.54 L1126.80 418.04 L1127.65 416.88 L1129.25 417.92 L1129.80 416.78 L1130.85 414.11 L1132.46 414.78 L1132.79 413.82 L1132.79 414.20 L1132.79 414.31 L1134.06 408.64 L1135.66 400.33 L1136.53 399.10 L1136.53 398.99 L1136.53 399.48 L1137.27 401.03 L1138.78 406.87 L1138.78 406.40 L1138.78 406.52 L1138.87 406.85 L1140.28 405.83 L1140.28 405.14 L1140.28 405.30 L1140.47 407.97 L1142.07 407.31 L1143.68 405.99 L1144.77 406.89 L1144.77 407.14 L1144.77 406.89 L1145.28 408.16 L1146.88 410.00 L1148.49 409.69 L1148.51 410.04 L1148.51 409.72 L1148.51 409.93 L1150.01 415.22 L1150.01 415.40 L1150.01 415.56 L1150.09 413.43 L1151.69 414.70 L1152.26 412.46 L1152.26 412.65 L1152.26 412.61 L1153.29 414.00 L1154.90 417.71 L1155.25 418.97 L1156.50 421.46 L1156.75 421.46 L1156.75 421.99 L1158.10 422.60 L1159.71 421.81 L1161.24 421.14 L1161.24 421.05 L1161.24 420.75 L1161.31 419.73 L1162.91 420.07 L1164.51 419.31 L1165.74 417.05 L1165.74 417.27 L1165.74 417.38 L1166.12 418.34 L1167.72 418.29 L1169.32 417.49 L1170.23 417.23 L1170.23 417.29 L1170.23 417.38 L1170.92 417.35 L1172.53 416.60 L1174.13 419.60 L1175.73 421.82 L1176.22 420.17 L1176.22 420.05 L1176.22 420.17 L1177.34 421.91 L1178.94 424.36 L1180.54 428.66 L1182.14 430.09 L1182.21 430.31 L1182.21 429.80 L1182.21 429.97 L1183.75 426.52 L1185.35 427.26 L1186.70 425.45 L1186.70 425.14 L1186.70 425.69 L1186.95 426.62 L1188.56 428.86 L1189.69 430.19 L1189.69 429.57 L1189.69 430.64 L1190.16 430.71 L1191.76 429.84 L1193.36 426.95 L1194.19 428.91 L1194.19 428.40 L1194.19 428.37 L1194.97 428.09 L1196.57 428.17 L1198.17 426.20 L1198.68 426.45 L1198.68 426.27 L1198.68 426.73 L1199.78 423.20 L1201.38 421.40 L1201.67 420.45 L1201.67 419.89 L1201.67 420.51 L1202.98 411.75 L1204.58 401.13 L1204.67 399.40 L1204.67 399.36 L1206.17 383.30 L1206.19 381.88 L1207.79 365.51 L1209.16 349.87 L1209.16 349.44 L1209.39 348.57 L1209.91 344.91 L1211.00 338.03 L1211.41 334.40 L1211.41 334.26 L1211.41 334.49 L1212.60 340.16 L1213.65 346.77 L1213.65 346.57 L1213.65 346.79 L1214.20 342.63 L1215.80 333.57 L1215.90 333.32 L1216.65 328.17 L1217.40 323.64 L1217.41 323.01 L1219.01 324.60 L1220.61 325.57 L1221.14 327.03 L1221.14 326.72 L1221.14 326.68 L1222.21 331.29 L1223.39 333.14 L1223.39 333.73 L1223.82 332.50 L1224.14 330.91 L1225.42 325.76 L1227.02 320.88 L1228.63 315.27 L1228.63 315.50 L1228.63 315.69 L1228.63 315.75 L1230.23 310.96 L1231.83 306.86 L1232.37 304.96 L1232.37 305.19 L1232.37 304.56 L1233.43 313.31 L1234.62 321.48 L1234.62 321.44 L1234.62 321.51 L1235.04 316.38 L1236.12 307.62 L1236.12 306.89 L1236.12 307.47 L1236.64 309.78 L1238.24 316.93 L1239.11 320.03 L1239.85 323.10 L1241.45 330.65 L1242.85 336.31 L1242.85 336.15 L1242.85 336.69 L1243.05 334.75 L1244.65 322.30 L1246.26 311.86 L1246.60 309.93 L1246.60 310.51 L1246.60 310.12 L1247.86 315.30 L1249.46 325.27 L1250.34 330.04 L1250.34 329.59 L1250.34 329.34 L1251.07 325.23 L1252.67 318.24 L1254.09 310.91 L1254.09 311.19 L1254.27 310.62 L1254.83 314.78 L1255.87 321.64 L1257.08 327.36 L1257.08 327.06 L1257.08 327.57 L1257.48 324.09 L1259.08 313.93 L1259.78 306.15 L1259.78 307.00 L1260.07 308.07 L1260.68 309.25 L1262.29 323.08 L1263.89 328.78 L1264.57 333.48 L1264.57 333.60 L1264.57 333.43 L1265.49 327.51 L1267.09 323.86 L1267.56 323.80 L1267.56 323.13 L1267.56 323.82 L1268.70 322.93 L1270.30 321.76 L1271.31 320.10 L1271.31 319.65 L1271.31 320.49 L1271.90 321.06 L1273.50 317.89 L1275.05 317.26 L1275.11 316.12 L1275.80 321.80 L1275.80 322.33 L1276.71 327.87 L1278.04 336.99 L1278.04 336.49 L1278.04 336.48 L1278.31 335.34 L1279.92 332.03 L1281.52 325.27 L1283.12 321.93 L1284.03 317.33 L1284.03 317.79 L1284.03 317.84 L1284.72 316.30 L1286.33 317.21 L1287.93 318.58 L1289.53 321.08 L1290.02 319.95 L1290.02 319.70 L1290.02 319.91 L1291.14 318.08 L1292.74 310.76 L1294.34 306.33 L1295.94 302.36 L1296.01 304.58 L1296.01 305.19 L1296.76 302.96 L1297.55 311.33 L1299.15 323.55 L1299.76 327.82 L1299.76 328.18 L1300.75 321.95 L1302.00 312.97 L1302.36 311.54 L1303.50 302.86 L1303.50 302.50 L1303.96 302.81 L1305.56 311.06 L1306.50 314.17 L1307.16 317.17 L1307.99 320.23 L1307.99 320.23 L1308.77 319.12 L1310.37 316.33 L1311.97 316.36 L1312.49 315.50 L1313.58 314.39 L1313.98 313.76 L1315.18 311.77 L1316.78 311.48 L1316.98 311.57 L1318.38 311.75 L1319.97 312.57 L1319.97 312.77 L1319.97 311.97 L1319.99 316.56 L1320.00 320.65 L1320.00 320.99 L1320.00 320.57 L1321.59 324.03 L1322.99 327.17 L1323.19 327.91 L1324.79 324.94 L1325.99 323.95 L1325.99 323.70 L1325.99 323.76 L1326.40 324.23 L1328.00 331.26 L1328.98 334.23 L1329.60 336.50 L1331.21 340.59 L1331.23 339.16 L1331.23 338.46 L1331.23 339.03 L1332.81 331.05 L1334.23 323.54 L1334.41 321.04 L1334.97 320.05 L1334.97 320.16 L1336.01 334.03 L1336.47 342.61 L1337.22 354.34 L1337.22 353.95 L1337.62 350.24 L1339.22 328.58 L1340.22 315.88 L1340.22 316.08 L1340.22 315.80 L1340.82 324.55 L1342.43 343.88 L1342.46 345.82 L1342.46 345.69 L1342.46 345.25 L1344.03 334.24 L1344.71 330.13 L1344.71 330.52 L1344.71 331.23 L1345.63 334.05 L1346.21 336.76 L1346.21 336.22 L1346.95 339.81 L1347.23 339.52 L1348.45 336.34 L1348.84 337.08 L1349.95 332.29 L1349.95 333.00 L1350.44 333.23 L1351.45 333.38 L1352.04 333.62 L1353.65 334.51 L1353.69 334.97 L1353.69 335.19 L1353.69 335.16 L1355.25 340.31 L1355.94 343.91 L1355.94 344.53 L1355.94 344.14 L1356.85 341.35 L1358.45 332.71 L1358.93 331.33 L1358.93 331.50 L1358.93 331.44 L1360.06 329.64 L1361.66 326.35 L1362.68 326.66 L1362.68 326.07 L1362.68 326.67 L1363.26 331.14 L1364.87 342.48 L1364.92 342.67 L1364.92 343.37 L1364.92 342.83 L1366.42 342.12 L1366.42 342.32 L1366.42 342.46 L1366.47 339.80 L1368.07 348.36 L1369.42 351.37 L1369.42 351.25 L1369.67 348.81 L1370.16 347.05 L1371.28 340.04 L1371.66 337.73 L1371.66 337.37 L1372.41 333.04 L1372.88 331.70 L1374.48 325.58 L1375.41 323.42 L1375.41 322.96 L1375.41 323.24 L1376.09 322.38 L1377.69 327.25 L1378.40 328.51 L1379.29 325.95 L1379.90 325.21 L1380.65 323.80 L1380.89 322.90 L1381.40 328.16 L1382.14 333.10 L1382.50 334.64 L1383.64 342.34 L1384.10 345.27 L1384.39 345.79 L1385.14 349.36 L1385.70 351.82 L1387.30 359.29 L1388.88 367.06 L1388.88 367.67 L1388.88 367.85 L1388.91 367.66 L1390.38 394.59 L1390.38 395.12 L1390.38 394.42 L1390.51 392.29 L1392.11 400.19 L1393.72 402.25 L1394.12 402.30 L1394.12 402.58 L1394.12 402.56 L1395.32 394.61 L1396.92 388.22 L1398.52 376.73 L1399.37 372.20 L1399.37 372.45 L1399.37 372.83 L1400.13 374.56 L1401.73 386.76 L1403.33 391.60 L1403.86 396.47 L1403.86 395.87 L1403.86 396.30 L1404.94 396.64 L1406.54 397.04 L1406.85 396.81 L1406.85 396.95 L1406.85 396.57 L1408.14 401.42 L1409.10 407.04 L1409.74 407.88 L1409.85 409.69 L1409.85 409.97 L1411.35 413.57 L1412.95 411.82 L1414.55 415.63 L1415.84 418.19 L1415.84 418.23 L1415.84 418.16 L1416.16 418.92 L1417.76 419.45 L1419.36 417.78 L1420.96 418.17 L1421.83 419.51 L1421.83 418.48 L1421.83 418.90 L1422.57 416.68 L1424.17 416.05 L1425.77 414.39 L1427.07 411.25 L1427.07 412.17 L1427.07 412.09 L1427.38 414.33 L1428.98 411.60 L1430.58 415.11 L1432.18 419.48 L1433.79 420.24 L1433.81 419.68 L1433.81 419.31 L1433.81 418.95 L1435.39 418.60 L1436.99 418.60 L1438.59 420.59 L1440.20 420.74 L1441.29 421.13 L1441.29 420.97 L1441.29 421.33 L1441.80 424.43 L1443.40 424.55 L1444.29 426.91 L1444.29 425.97 L1444.29 426.15 L1445.01 426.30 L1446.61 426.30 L1448.21 428.33 L1449.81 427.82 L1450.28 426.97 L1451.42 428.79 L1451.78 427.75 L1451.78 426.75 L1453.02 426.44 L1454.62 425.98 L1456.23 423.98 L1456.27 423.27 L1456.27 423.15 L1456.27 423.21 L1457.83 422.41 L1459.26 422.39 L1459.43 421.31 L1460.01 422.11 L1461.03 427.81 L1461.51 430.48 L1461.51 430.55 L1461.51 430.68 L1462.64 428.36 L1464.24 425.94 L1465.84 422.24 L1466.75 421.70 L1466.75 421.48 L1467.45 421.69 L1467.50 420.36 L1469.05 420.78 L1470.65 422.53 L1471.24 420.79 L1471.24 421.26 L1471.24 421.64 L1472.25 419.83 L1472.74 420.84 L1473.86 420.86 L1475.46 421.69 L1475.74 420.17 L1475.74 420.37 L1477.06 416.12 L1477.23 416.52 L1478.67 412.17 L1480.27 408.59 L1480.98 406.44 L1480.98 407.09 L1481.73 405.05 L1481.87 405.25 L1483.47 400.82 L1485.08 398.20 L1485.47 397.75 L1485.47 397.75 L1485.47 397.74 L1486.68 397.58 L1488.28 394.37 L1489.21 393.09 L1489.21 393.50 L1489.88 395.91 L1489.96 393.95 L1491.49 395.79 L1493.09 396.91 L1494.69 397.68 L1496.30 400.74 L1496.70 402.33 L1496.70 402.83 L1496.70 402.44 L1497.90 405.08 L1499.50 408.24 L1501.10 412.14 L1502.71 415.91 L1504.19 416.79 L1504.19 417.41 L1504.19 417.10 L1504.31 417.65 L1505.91 418.22 L1507.52 418.60 L1509.12 416.49 L1510.72 418.93 L1511.67 418.40 L1511.67 418.18 L1511.67 417.96 L1512.32 418.83 L1513.93 415.68 L1514.67 414.09 L1514.67 413.98 L1514.67 414.03 L1515.53 412.78 L1517.13 414.48 L1518.74 413.53 L1520.34 411.95 L1521.94 413.04 L1522.16 413.91 L1522.16 414.20 L1522.16 414.14 L1523.54 415.22 L1525.15 416.73 L1526.65 419.19 L1526.75 418.96 L1528.35 419.87 L1529.64 421.57 L1529.64 422.00 L1529.96 421.57 L1531.56 418.12 L1533.16 419.74 L1534.76 419.98 L1535.63 420.24 L1535.63 420.29 L1535.63 419.93 L1536.37 421.44 L1537.97 424.31 L1538.63 425.19 L1538.63 425.99 L1538.63 425.40 L1539.57 426.07 L1541.17 422.30 L1542.78 423.31 L1544.38 422.86 L1545.98 419.16 L1547.59 422.22 L1548.36 420.08 L1548.36 420.66 L1548.36 420.19 L1549.19 420.23 L1550.79 422.27 L1552.39 424.36 L1552.85 426.41 L1552.85 426.31 L1552.85 425.70 L1554.00 423.90 L1555.60 421.71 L1557.20 419.95 L1557.35 420.11 L1558.81 416.91 L1560.41 415.77 L1561.09 413.95 L1561.09 414.60 L1561.09 414.31 L1562.01 410.74 L1563.61 406.03 L1565.22 405.40 L1565.58 404.07 L1566.33 402.03 L1566.33 402.43 L1566.82 405.12 L1568.42 412.63 L1568.58 414.47 L1568.58 414.54 L1568.58 414.46 L1570.03 410.34 L1571.57 407.75 L1571.63 407.36 L1573.07 403.62 L1573.07 403.76 L1573.23 403.52 L1574.83 399.98 L1576.44 393.80 L1578.04 389.26 L1578.31 388.75 L1578.31 388.75 L1578.31 388.57 L1579.64 395.28 L1581.25 399.61 L1581.31 401.25 L1581.31 401.05 L1581.31 400.98 L1582.85 400.48 L1584.45 402.00 L1585.05 400.39 L1585.05 399.92 L1585.05 400.47 L1586.05 401.67 L1587.66 405.15 L1589.26 408.54 L1589.54 409.90 L1589.54 409.79 L1589.54 409.91 L1590.86 411.55 L1592.46 412.46 L1594.03 413.02 L1594.07 411.79 L1595.53 414.40 L1595.53 414.21 L1595.67 414.57 L1597.27 418.64 L1598.88 422.28 L1600.02 421.66 L1600.02 421.33 L1600.02 421.97 L1600.48 419.47 L1601.52 413.12 L1601.52 413.70 L1602.08 413.90 L1603.68 415.22 L1604.52 415.96 L1605.29 418.59 L1606.89 418.42 L1608.49 420.12 L1610.10 421.42 L1611.70 422.46 L1612.00 423.20 L1612.00 423.41 L1612.00 423.43 L1613.30 423.12 L1614.90 424.01 L1616.51 421.81 L1618.11 423.77 L1619.49 423.52 L1619.49 423.51 L1619.49 423.38 L1619.71 422.96 L1621.32 421.07 L1622.49 418.58 L1622.49 418.25 L1622.49 417.95 L1622.92 418.22 L1624.52 415.04 L1626.12 416.89 L1627.73 416.94 L1627.73 416.69 L1627.73 416.61 L1627.73 417.22 L1627.73 544.5 L1012.25 544.5 Z" fill="#F2B712"/><path d="M1012.25 441.27 L1012.25 441.05 L1012.25 441.50 L1012.25 441.65 L1013.85 443.80 L1015.45 446.99 L1015.99 448.50 L1015.99 448.80 L1015.99 448.84 L1017.05 453.25 L1018.66 455.32 L1019.73 459.29 L1019.73 458.99 L1019.73 459.30 L1020.26 458.62 L1021.86 458.92 L1023.47 458.65 L1023.48 458.98 L1023.48 459.47 L1023.48 459.29 L1025.07 455.30 L1026.47 451.36 L1026.47 451.65 L1026.47 451.98 L1026.67 449.03 L1028.27 451.89 L1029.88 455.14 L1031.48 456.74 L1032.46 456.39 L1032.46 456.58 L1032.46 455.78 L1033.08 453.60 L1034.69 451.82 L1035.46 450.25 L1035.46 450.42 L1035.46 450.31 L1036.29 449.35 L1037.89 446.65 L1039.49 445.91 L1041.10 444.62 L1041.45 444.19 L1041.45 444.44 L1041.45 444.35 L1042.70 441.20 L1044.30 436.95 L1045.91 431.47 L1046.69 429.40 L1046.69 429.61 L1046.69 429.10 L1047.51 429.99 L1049.11 431.57 L1050.43 432.99 L1050.43 432.96 L1050.43 433.07 L1050.71 433.49 L1052.32 432.72 L1053.92 432.56 L1054.92 431.95 L1054.92 432.15 L1054.92 432.44 L1055.52 434.70 L1057.12 440.56 L1057.92 441.55 L1057.92 441.22 L1057.92 441.38 L1058.73 441.36 L1060.33 442.05 L1061.93 446.66 L1063.54 446.18 L1065.14 449.04 L1065.41 448.88 L1065.41 448.96 L1065.41 448.86 L1066.74 446.03 L1066.90 445.96 L1066.90 445.93 L1066.90 445.94 L1068.34 444.44 L1069.95 445.78 L1071.55 446.66 L1073.15 446.71 L1074.76 446.95 L1076.36 444.36 L1077.96 446.44 L1078.88 446.45 L1078.88 446.79 L1078.88 446.73 L1079.56 446.06 L1081.17 447.64 L1082.77 451.58 L1083.38 451.58 L1083.38 451.75 L1083.38 451.45 L1084.37 451.33 L1085.98 451.31 L1087.58 452.48 L1089.18 451.96 L1090.78 454.84 L1090.86 454.89 L1090.86 454.90 L1090.86 455.07 L1092.39 455.99 L1093.99 457.40 L1095.59 457.69 L1096.10 456.45 L1096.10 456.25 L1096.10 456.18 L1097.20 454.32 L1098.35 451.45 L1098.35 452.02 L1098.35 451.91 L1098.80 452.13 L1100.40 451.67 L1102.00 453.25 L1103.61 452.10 L1105.09 453.94 L1105.09 454.50 L1105.09 453.99 L1105.21 455.29 L1106.81 446.54 L1107.33 445.80 L1107.33 445.78 L1107.33 445.88 L1108.42 448.48 L1110.02 450.66 L1110.33 451.75 L1110.33 451.51 L1110.33 451.97 L1111.62 447.91 L1113.22 443.25 L1113.32 442.91 L1113.32 443.71 L1113.32 443.43 L1114.82 448.73 L1114.83 448.84 L1115.57 451.30 L1115.57 451.06 L1116.43 450.65 L1118.03 448.25 L1119.31 444.71 L1119.63 444.49 L1121.24 440.84 L1122.31 439.98 L1122.31 439.88 L1122.31 439.79 L1122.84 440.48 L1124.44 442.43 L1124.56 443.04 L1124.56 443.58 L1124.56 443.52 L1126.05 438.26 L1126.80 435.05 L1126.80 434.91 L1126.80 434.67 L1127.65 433.76 L1129.25 435.20 L1129.80 434.94 L1130.85 433.25 L1132.46 433.79 L1132.79 433.29 L1132.79 433.67 L1132.79 433.73 L1134.06 427.96 L1135.66 419.20 L1136.53 417.80 L1136.53 417.75 L1136.53 418.20 L1137.27 420.03 L1138.78 426.44 L1138.78 425.98 L1138.78 426.06 L1138.87 426.52 L1140.28 424.38 L1140.28 424.21 L1140.28 423.93 L1140.47 425.95 L1142.07 426.02 L1143.68 425.92 L1144.77 426.32 L1144.77 426.61 L1144.77 426.48 L1145.28 427.61 L1146.88 430.16 L1148.49 432.39 L1148.51 432.40 L1148.51 432.07 L1148.51 432.49 L1150.01 433.14 L1150.01 433.44 L1150.01 433.41 L1150.09 432.45 L1151.69 433.40 L1152.26 430.25 L1152.26 430.67 L1152.26 430.58 L1153.29 431.44 L1154.90 435.35 L1155.25 435.71 L1156.50 438.30 L1156.75 437.98 L1156.75 438.38 L1158.10 439.29 L1159.71 439.08 L1161.24 438.30 L1161.24 438.26 L1161.24 438.10 L1161.31 437.57 L1162.91 436.91 L1164.51 436.23 L1165.74 434.27 L1165.74 434.50 L1165.74 434.50 L1166.12 435.54 L1167.72 435.65 L1169.32 435.32 L1170.23 434.98 L1170.23 435.15 L1170.23 435.30 L1170.92 434.51 L1172.53 435.67 L1174.13 437.04 L1175.73 439.14 L1176.22 438.80 L1176.22 438.94 L1176.22 439.08 L1177.34 439.79 L1178.94 441.92 L1180.54 445.43 L1182.14 445.80 L1182.21 446.09 L1182.21 445.75 L1182.21 445.64 L1183.75 441.96 L1185.35 441.92 L1186.70 440.36 L1186.70 440.12 L1186.70 440.62 L1186.95 440.60 L1188.56 444.22 L1189.69 445.02 L1189.69 444.45 L1189.69 445.22 L1190.16 445.13 L1191.76 445.55 L1193.36 441.43 L1194.19 443.56 L1194.19 443.45 L1194.19 443.25 L1194.97 443.03 L1196.57 442.84 L1198.17 441.21 L1198.68 440.82 L1198.68 440.73 L1198.68 440.83 L1199.78 438.62 L1201.38 436.47 L1201.67 435.33 L1201.67 435.18 L1201.67 435.28 L1202.98 427.52 L1204.58 418.98 L1204.67 418.47 L1204.67 418.31 L1206.17 410.35 L1206.19 409.45 L1207.79 391.01 L1209.16 373.72 L1209.16 373.48 L1209.39 371.32 L1209.91 364.88 L1211.00 356.42 L1211.41 352.75 L1211.41 352.98 L1211.41 353.11 L1212.60 356.04 L1213.65 360.40 L1213.65 360.09 L1213.65 360.37 L1214.20 356.79 L1215.80 349.17 L1215.90 349.61 L1216.65 344.96 L1217.40 344.53 L1217.41 343.98 L1219.01 341.94 L1220.61 340.62 L1221.14 341.06 L1221.14 341.01 L1221.14 340.92 L1222.21 346.69 L1223.39 349.58 L1223.39 350.13 L1223.82 349.33 L1224.14 347.58 L1225.42 342.97 L1227.02 339.12 L1228.63 333.84 L1228.63 333.52 L1228.63 333.76 L1228.63 333.37 L1230.23 330.28 L1231.83 328.28 L1232.37 325.19 L1232.37 325.40 L1232.37 325.03 L1233.43 331.67 L1234.62 338.16 L1234.62 337.80 L1234.62 337.90 L1235.04 334.50 L1236.12 329.20 L1236.12 328.53 L1236.12 329.24 L1236.64 331.12 L1238.24 335.88 L1239.11 338.18 L1239.85 340.08 L1241.45 345.25 L1242.85 349.71 L1242.85 349.94 L1242.85 350.16 L1243.05 348.84 L1244.65 339.38 L1246.26 331.08 L1246.60 330.30 L1246.60 330.70 L1246.60 330.31 L1247.86 335.16 L1249.46 344.48 L1250.34 349.42 L1250.34 349.10 L1250.34 349.07 L1251.07 345.57 L1252.67 338.74 L1254.09 331.90 L1254.09 331.76 L1254.27 330.81 L1254.83 334.20 L1255.87 338.12 L1257.08 340.91 L1257.08 340.88 L1257.08 340.94 L1257.48 338.41 L1259.08 332.32 L1259.78 327.74 L1259.78 328.59 L1260.07 329.37 L1260.68 330.71 L1262.29 342.85 L1263.89 347.09 L1264.57 350.86 L1264.57 350.79 L1264.57 350.60 L1265.49 346.98 L1267.09 343.62 L1267.56 344.00 L1267.56 343.66 L1267.56 343.95 L1268.70 341.45 L1270.30 338.89 L1271.31 336.65 L1271.31 336.24 L1271.31 336.96 L1271.90 337.33 L1273.50 335.77 L1275.05 335.47 L1275.11 334.34 L1275.80 335.00 L1275.80 335.25 L1276.71 342.70 L1278.04 354.77 L1278.04 354.49 L1278.04 354.66 L1278.31 353.68 L1279.92 349.03 L1281.52 344.60 L1283.12 340.55 L1284.03 336.22 L1284.03 336.50 L1284.03 336.34 L1284.72 335.13 L1286.33 336.14 L1287.93 337.38 L1289.53 339.89 L1290.02 338.67 L1290.02 338.78 L1290.02 338.53 L1291.14 335.69 L1292.74 330.81 L1294.34 325.61 L1295.94 323.04 L1296.01 324.43 L1296.01 324.70 L1296.76 328.24 L1297.55 333.92 L1299.15 339.99 L1299.76 342.12 L1299.76 342.32 L1300.75 337.43 L1302.00 331.12 L1302.36 330.13 L1303.50 323.80 L1303.50 323.65 L1303.96 323.83 L1305.56 330.63 L1306.50 332.99 L1307.16 335.89 L1307.99 338.10 L1307.99 338.08 L1308.77 337.36 L1310.37 336.02 L1311.97 336.42 L1312.49 335.67 L1313.58 335.14 L1313.98 334.55 L1315.18 334.62 L1316.78 337.64 L1316.98 337.04 L1318.38 337.98 L1319.97 338.64 L1319.97 339.07 L1319.97 338.28 L1319.99 341.07 L1320.00 343.89 L1320.00 344.06 L1320.00 343.56 L1321.59 344.06 L1322.99 342.73 L1323.19 342.78 L1324.79 342.71 L1325.99 341.89 L1325.99 341.55 L1325.99 341.69 L1326.40 342.87 L1328.00 347.06 L1328.98 349.00 L1329.60 350.57 L1331.21 355.39 L1331.23 354.62 L1331.23 354.34 L1331.23 354.68 L1332.81 349.20 L1334.23 344.12 L1334.41 342.35 L1334.97 341.97 L1334.97 341.96 L1336.01 358.55 L1336.47 368.12 L1337.22 381.16 L1337.22 381.03 L1337.62 376.19 L1339.22 353.96 L1340.22 339.24 L1340.22 339.39 L1340.22 338.92 L1340.82 348.55 L1342.43 367.10 L1342.46 369.56 L1342.46 369.50 L1342.46 369.27 L1344.03 356.81 L1344.71 352.40 L1344.71 353.18 L1344.71 353.39 L1345.63 356.60 L1346.21 359.21 L1346.21 358.76 L1346.95 357.53 L1347.23 357.35 L1348.45 354.62 L1348.84 355.21 L1349.95 350.98 L1349.95 351.85 L1350.44 352.85 L1351.45 351.88 L1352.04 352.41 L1353.65 352.82 L1353.69 352.90 L1353.69 353.18 L1353.69 352.97 L1355.25 358.59 L1355.94 362.00 L1355.94 362.28 L1355.94 361.89 L1356.85 357.84 L1358.45 351.06 L1358.93 349.28 L1358.93 349.40 L1358.93 349.25 L1360.06 348.27 L1361.66 344.04 L1362.68 344.41 L1362.68 344.33 L1362.68 344.68 L1363.26 350.87 L1364.87 366.22 L1364.92 366.92 L1364.92 367.32 L1364.92 366.94 L1366.42 359.98 L1366.42 360.43 L1366.42 360.39 L1366.47 358.57 L1368.07 365.55 L1369.42 367.88 L1369.42 367.47 L1369.67 365.78 L1370.16 361.87 L1371.28 352.55 L1371.66 349.84 L1371.66 349.76 L1372.41 348.08 L1372.88 347.38 L1374.48 343.88 L1375.41 341.99 L1375.41 341.64 L1375.41 341.78 L1376.09 340.80 L1377.69 342.60 L1378.40 342.18 L1379.29 342.05 L1379.90 342.62 L1380.65 343.03 L1380.89 341.18 L1381.40 343.06 L1382.14 347.74 L1382.50 350.31 L1383.64 357.06 L1384.10 360.47 L1384.39 361.81 L1385.14 365.56 L1385.70 367.77 L1387.30 375.35 L1388.88 382.76 L1388.88 383.11 L1388.88 383.42 L1388.91 383.52 L1390.38 413.40 L1390.38 413.91 L1390.38 413.20 L1390.51 412.25 L1392.11 415.98 L1393.72 417.43 L1394.12 418.08 L1394.12 418.15 L1394.12 418.28 L1395.32 412.02 L1396.92 405.10 L1398.52 396.03 L1399.37 391.50 L1399.37 392.03 L1399.37 392.14 L1400.13 393.67 L1401.73 404.03 L1403.33 408.23 L1403.86 411.29 L1403.86 410.80 L1403.86 411.28 L1404.94 412.46 L1406.54 415.07 L1406.85 415.64 L1406.85 415.89 L1406.85 415.33 L1408.14 419.53 L1409.10 423.97 L1409.74 424.99 L1409.85 426.17 L1409.85 426.60 L1411.35 429.79 L1412.95 428.52 L1414.55 432.31 L1415.84 433.83 L1415.84 434.08 L1415.84 433.78 L1416.16 434.15 L1417.76 435.13 L1419.36 434.83 L1420.96 435.19 L1421.83 436.62 L1421.83 435.74 L1421.83 435.88 L1422.57 435.41 L1424.17 433.49 L1425.77 432.08 L1427.07 429.57 L1427.07 430.17 L1427.07 429.78 L1427.38 431.46 L1428.98 429.44 L1430.58 432.19 L1432.18 436.28 L1433.79 436.16 L1433.81 436.13 L1433.81 436.01 L1433.81 435.35 L1435.39 436.66 L1436.99 436.24 L1438.59 437.22 L1440.20 438.21 L1441.29 438.27 L1441.29 438.21 L1441.29 438.47 L1441.80 440.43 L1443.40 439.69 L1444.29 441.77 L1444.29 440.91 L1444.29 441.18 L1445.01 441.14 L1446.61 440.76 L1448.21 443.08 L1449.81 443.05 L1450.28 442.39 L1451.42 443.22 L1451.78 443.36 L1451.78 442.59 L1453.02 441.97 L1454.62 440.82 L1456.23 440.16 L1456.27 439.76 L1456.27 439.63 L1456.27 439.67 L1457.83 441.70 L1459.26 442.96 L1459.43 442.36 L1460.01 443.85 L1461.03 444.29 L1461.51 444.72 L1461.51 444.93 L1461.51 444.89 L1462.64 443.23 L1464.24 440.06 L1465.84 437.63 L1466.75 435.97 L1466.75 435.98 L1467.45 437.21 L1467.50 435.57 L1469.05 435.72 L1470.65 435.02 L1471.24 433.62 L1471.24 433.82 L1471.24 434.20 L1472.25 433.29 L1472.74 434.46 L1473.86 435.08 L1475.46 436.97 L1475.74 435.99 L1475.74 436.26 L1477.06 433.04 L1477.23 433.21 L1478.67 429.90 L1480.27 427.74 L1480.98 425.98 L1480.98 426.47 L1481.73 424.83 L1481.87 424.35 L1483.47 419.77 L1485.08 418.31 L1485.47 417.80 L1485.47 417.85 L1485.47 417.89 L1486.68 417.55 L1488.28 414.44 L1489.21 412.72 L1489.21 412.96 L1489.88 414.46 L1489.96 413.56 L1491.49 415.10 L1493.09 416.03 L1494.69 416.38 L1496.30 418.87 L1496.70 420.38 L1496.70 420.66 L1496.70 420.43 L1497.90 422.88 L1499.50 425.81 L1501.10 428.79 L1502.71 432.24 L1504.19 433.36 L1504.19 434.06 L1504.19 433.68 L1504.31 434.01 L1505.91 434.51 L1507.52 435.45 L1509.12 434.19 L1510.72 437.00 L1511.67 436.32 L1511.67 436.02 L1511.67 435.84 L1512.32 436.01 L1513.93 433.77 L1514.67 433.03 L1514.67 432.86 L1514.67 432.74 L1515.53 432.25 L1517.13 432.67 L1518.74 432.22 L1520.34 430.10 L1521.94 431.49 L1522.16 431.28 L1522.16 431.55 L1522.16 431.46 L1523.54 433.44 L1525.15 433.44 L1526.65 435.81 L1526.75 435.26 L1528.35 437.42 L1529.64 438.34 L1529.64 438.47 L1529.96 437.18 L1531.56 435.35 L1533.16 436.89 L1534.76 436.46 L1535.63 437.54 L1535.63 437.43 L1535.63 437.43 L1536.37 438.26 L1537.97 439.23 L1538.63 440.22 L1538.63 440.68 L1538.63 440.38 L1539.57 440.27 L1541.17 437.68 L1542.78 438.99 L1544.38 437.48 L1545.98 435.29 L1547.59 437.33 L1548.36 435.13 L1548.36 435.63 L1548.36 435.21 L1549.19 435.33 L1550.79 439.66 L1552.39 440.28 L1552.85 442.13 L1552.85 441.98 L1552.85 441.63 L1554.00 439.59 L1555.60 437.55 L1557.20 435.26 L1557.35 435.95 L1558.81 432.45 L1560.41 432.81 L1561.09 429.60 L1561.09 430.06 L1561.09 429.74 L1562.01 427.94 L1563.61 422.43 L1565.22 422.38 L1565.58 420.79 L1566.33 419.25 L1566.33 419.58 L1566.82 422.46 L1568.42 429.28 L1568.58 430.74 L1568.58 430.92 L1568.58 430.93 L1570.03 427.29 L1571.57 424.12 L1571.63 424.11 L1573.07 420.07 L1573.07 420.04 L1573.23 419.68 L1574.83 417.22 L1576.44 411.84 L1578.04 408.33 L1578.31 407.54 L1578.31 407.53 L1578.31 407.32 L1579.64 414.41 L1581.25 420.72 L1581.31 421.95 L1581.31 421.86 L1581.31 421.80 L1582.85 420.99 L1584.45 421.02 L1585.05 419.64 L1585.05 419.59 L1585.05 419.71 L1586.05 421.95 L1587.66 425.63 L1589.26 429.87 L1589.54 430.62 L1589.54 430.99 L1589.54 430.82 L1590.86 431.13 L1592.46 431.84 L1594.03 431.34 L1594.07 430.76 L1595.53 431.61 L1595.53 431.44 L1595.67 432.40 L1597.27 434.46 L1598.88 437.10 L1600.02 437.44 L1600.02 437.33 L1600.02 437.55 L1600.48 436.27 L1601.52 431.20 L1601.52 431.59 L1602.08 431.43 L1603.68 432.75 L1604.52 433.08 L1605.29 435.65 L1606.89 434.33 L1608.49 435.89 L1610.10 437.18 L1611.70 437.08 L1612.00 438.04 L1612.00 438.09 L1612.00 438.54 L1613.30 438.65 L1614.90 440.11 L1616.51 438.81 L1618.11 440.23 L1619.49 439.95 L1619.49 440.05 L1619.49 439.70 L1619.71 439.36 L1621.32 437.60 L1622.49 434.86 L1622.49 434.61 L1622.49 434.44 L1622.92 435.05 L1624.52 431.48 L1626.12 432.52 L1627.73 432.60 L1627.73 432.22 L1627.73 432.20 L1627.73 433.81 L1627.73 544.5 L1012.25 544.5 Z" fill="#D6567F"/><path d="M1012.25 471.15 L1012.25 471.14 L1012.25 471.39 L1012.25 471.37 L1013.85 472.59 L1015.45 476.67 L1015.99 477.03 L1015.99 477.17 L1015.99 477.24 L1017.05 480.51 L1018.66 482.08 L1019.73 484.65 L1019.73 484.59 L1019.73 484.88 L1020.26 485.07 L1021.86 486.01 L1023.47 485.34 L1023.48 485.41 L1023.48 485.53 L1023.48 485.48 L1025.07 483.06 L1026.47 479.96 L1026.47 480.40 L1026.47 480.22 L1026.67 478.97 L1028.27 480.79 L1029.88 483.08 L1031.48 483.61 L1032.46 484.01 L1032.46 484.14 L1032.46 483.57 L1033.08 481.26 L1034.69 478.00 L1035.46 477.16 L1035.46 477.20 L1035.46 477.11 L1036.29 475.94 L1037.89 475.04 L1039.49 474.05 L1041.10 472.23 L1041.45 472.55 L1041.45 472.84 L1041.45 472.72 L1042.70 470.38 L1044.30 467.51 L1045.91 464.00 L1046.69 462.20 L1046.69 462.27 L1046.69 462.01 L1047.51 463.03 L1049.11 464.34 L1050.43 465.26 L1050.43 465.16 L1050.43 465.12 L1050.71 465.20 L1052.32 466.56 L1053.92 465.54 L1054.92 465.48 L1054.92 466.07 L1054.92 466.16 L1055.52 468.01 L1057.12 472.53 L1057.92 473.92 L1057.92 473.39 L1057.92 473.48 L1058.73 472.95 L1060.33 474.41 L1061.93 476.77 L1063.54 477.37 L1065.14 479.61 L1065.41 478.85 L1065.41 478.93 L1065.41 478.75 L1066.74 475.29 L1066.90 475.94 L1066.90 475.86 L1066.90 475.93 L1068.34 475.50 L1069.95 476.10 L1071.55 476.56 L1073.15 476.03 L1074.76 477.30 L1076.36 474.96 L1077.96 477.12 L1078.88 476.40 L1078.88 476.47 L1078.88 476.53 L1079.56 476.23 L1081.17 477.57 L1082.77 480.88 L1083.38 480.95 L1083.38 480.81 L1083.38 480.77 L1084.37 481.04 L1085.98 479.79 L1087.58 480.41 L1089.18 480.53 L1090.78 482.09 L1090.86 482.54 L1090.86 482.54 L1090.86 482.58 L1092.39 482.31 L1093.99 483.20 L1095.59 483.58 L1096.10 483.27 L1096.10 483.16 L1096.10 483.17 L1097.20 481.10 L1098.35 479.28 L1098.35 479.63 L1098.35 479.54 L1098.80 479.83 L1100.40 478.52 L1102.00 479.75 L1103.61 479.61 L1105.09 480.96 L1105.09 481.30 L1105.09 480.69 L1105.21 481.80 L1106.81 475.36 L1107.33 473.43 L1107.33 473.42 L1107.33 473.55 L1108.42 475.61 L1110.02 477.02 L1110.33 477.96 L1110.33 477.91 L1110.33 478.11 L1111.62 475.98 L1113.22 472.91 L1113.32 472.50 L1113.32 472.97 L1113.32 472.56 L1114.82 478.71 L1114.83 478.66 L1115.57 478.10 L1115.57 477.90 L1116.43 477.82 L1118.03 475.32 L1119.31 474.15 L1119.63 473.39 L1121.24 470.83 L1122.31 469.01 L1122.31 468.95 L1122.31 468.98 L1122.84 470.31 L1124.44 472.51 L1124.56 472.34 L1124.56 472.79 L1124.56 472.44 L1126.05 468.49 L1126.80 464.88 L1126.80 464.87 L1126.80 464.89 L1127.65 465.40 L1129.25 467.21 L1129.80 467.71 L1130.85 465.24 L1132.46 462.73 L1132.79 461.93 L1132.79 462.17 L1132.79 462.07 L1134.06 459.61 L1135.66 454.56 L1136.53 454.46 L1136.53 454.48 L1136.53 454.80 L1137.27 457.29 L1138.78 464.58 L1138.78 464.22 L1138.78 464.26 L1138.87 464.22 L1140.28 459.62 L1140.28 459.23 L1140.28 459.08 L1140.47 460.94 L1142.07 460.65 L1143.68 460.80 L1144.77 461.67 L1144.77 461.83 L1144.77 461.66 L1145.28 462.05 L1146.88 462.61 L1148.49 464.44 L1148.51 464.70 L1148.51 464.37 L1148.51 464.69 L1150.01 468.34 L1150.01 468.46 L1150.01 468.60 L1150.09 467.64 L1151.69 467.21 L1152.26 464.94 L1152.26 465.12 L1152.26 465.18 L1153.29 466.01 L1154.90 470.15 L1155.25 470.47 L1156.50 470.98 L1156.75 470.32 L1156.75 470.49 L1158.10 471.91 L1159.71 472.40 L1161.24 470.47 L1161.24 470.40 L1161.24 470.58 L1161.31 470.41 L1162.91 470.05 L1164.51 469.33 L1165.74 468.18 L1165.74 468.28 L1165.74 468.33 L1166.12 469.50 L1167.72 468.09 L1169.32 468.83 L1170.23 468.20 L1170.23 468.35 L1170.23 468.17 L1170.92 467.50 L1172.53 468.94 L1174.13 469.29 L1175.73 471.25 L1176.22 471.10 L1176.22 471.29 L1176.22 471.24 L1177.34 471.75 L1178.94 472.81 L1180.54 474.63 L1182.14 475.49 L1182.21 475.07 L1182.21 474.92 L1182.21 474.94 L1183.75 473.12 L1185.35 473.02 L1186.70 471.89 L1186.70 471.67 L1186.70 472.09 L1186.95 471.67 L1188.56 472.85 L1189.69 474.19 L1189.69 473.97 L1189.69 474.33 L1190.16 474.02 L1191.76 473.07 L1193.36 471.48 L1194.19 471.13 L1194.19 471.19 L1194.19 471.05 L1194.97 470.83 L1196.57 470.64 L1198.17 469.66 L1198.68 469.20 L1198.68 469.13 L1198.68 469.23 L1199.78 467.71 L1201.38 466.25 L1201.67 465.26 L1201.67 465.14 L1201.67 465.13 L1202.98 453.84 L1204.58 440.24 L1204.67 439.75 L1204.67 439.78 L1206.17 430.96 L1206.19 430.24 L1207.79 421.37 L1209.16 412.88 L1209.16 412.52 L1209.39 409.74 L1209.91 403.74 L1211.00 390.79 L1211.41 385.88 L1211.41 386.22 L1211.41 385.91 L1212.60 391.60 L1213.65 397.25 L1213.65 397.06 L1213.65 396.99 L1214.20 393.72 L1215.80 385.85 L1215.90 386.04 L1216.65 385.44 L1217.40 385.07 L1217.41 384.24 L1219.01 383.23 L1220.61 382.51 L1221.14 383.67 L1221.14 383.55 L1221.14 383.72 L1222.21 385.61 L1223.39 385.08 L1223.39 385.44 L1223.82 385.57 L1224.14 385.74 L1225.42 383.07 L1227.02 380.50 L1228.63 377.16 L1228.63 376.99 L1228.63 376.99 L1228.63 376.93 L1230.23 375.55 L1231.83 375.50 L1232.37 374.53 L1232.37 374.49 L1232.37 374.32 L1233.43 377.89 L1234.62 380.07 L1234.62 379.55 L1234.62 379.70 L1235.04 379.88 L1236.12 378.51 L1236.12 377.92 L1236.12 378.80 L1236.64 378.90 L1238.24 381.28 L1239.11 381.25 L1239.85 382.73 L1241.45 388.90 L1242.85 393.90 L1242.85 394.17 L1242.85 394.29 L1243.05 393.21 L1244.65 387.24 L1246.26 382.07 L1246.60 381.12 L1246.60 381.41 L1246.60 381.22 L1247.86 384.67 L1249.46 391.33 L1250.34 394.96 L1250.34 394.77 L1250.34 394.77 L1251.07 392.17 L1252.67 387.05 L1254.09 382.71 L1254.09 382.02 L1254.27 379.97 L1254.83 379.79 L1255.87 382.52 L1257.08 384.24 L1257.08 384.38 L1257.08 384.33 L1257.48 382.34 L1259.08 377.44 L1259.78 374.75 L1259.78 375.17 L1260.07 373.75 L1260.68 375.65 L1262.29 384.44 L1263.89 388.60 L1264.57 392.06 L1264.57 392.06 L1264.57 391.82 L1265.49 389.03 L1267.09 384.62 L1267.56 384.35 L1267.56 384.20 L1267.56 384.31 L1268.70 382.44 L1270.30 379.97 L1271.31 378.39 L1271.31 378.29 L1271.31 378.62 L1271.90 378.25 L1273.50 377.36 L1275.05 375.31 L1275.11 374.58 L1275.80 374.46 L1275.80 374.61 L1276.71 382.44 L1278.04 393.61 L1278.04 393.34 L1278.04 393.40 L1278.31 392.61 L1279.92 388.43 L1281.52 385.08 L1283.12 381.98 L1284.03 378.15 L1284.03 378.36 L1284.03 378.40 L1284.72 378.07 L1286.33 378.39 L1287.93 379.53 L1289.53 380.72 L1290.02 379.87 L1290.02 379.98 L1290.02 379.84 L1291.14 378.59 L1292.74 377.08 L1294.34 374.93 L1295.94 374.96 L1296.01 375.46 L1296.01 375.41 L1296.76 375.25 L1297.55 376.04 L1299.15 374.50 L1299.76 373.86 L1299.76 373.68 L1300.75 372.73 L1302.00 372.77 L1302.36 374.96 L1303.50 374.93 L1303.50 375.04 L1303.96 374.41 L1305.56 377.52 L1306.50 378.23 L1307.16 379.22 L1307.99 379.37 L1307.99 379.30 L1308.77 378.70 L1310.37 379.18 L1311.97 381.99 L1312.49 381.39 L1313.58 381.28 L1313.98 381.83 L1315.18 382.17 L1316.78 382.96 L1316.98 382.96 L1318.38 383.01 L1319.97 383.40 L1319.97 383.86 L1319.97 383.30 L1319.99 384.14 L1320.00 385.79 L1320.00 385.87 L1320.00 385.72 L1321.59 386.31 L1322.99 386.53 L1323.19 386.27 L1324.79 388.15 L1325.99 387.43 L1325.99 387.11 L1325.99 387.43 L1326.40 388.70 L1328.00 391.59 L1328.98 393.48 L1329.60 394.35 L1331.21 397.59 L1331.23 397.96 L1331.23 397.79 L1331.23 397.90 L1332.81 391.01 L1334.23 384.09 L1334.41 386.92 L1334.97 397.97 L1334.97 397.98 L1336.01 415.50 L1336.47 424.83 L1337.22 416.58 L1337.22 416.32 L1337.62 411.79 L1339.22 394.96 L1340.22 383.50 L1340.22 383.68 L1340.22 383.41 L1340.82 391.20 L1342.43 406.01 L1342.46 408.35 L1342.46 408.50 L1342.46 408.43 L1344.03 397.90 L1344.71 394.63 L1344.71 394.89 L1344.71 395.01 L1345.63 398.83 L1346.21 401.74 L1346.21 401.32 L1346.95 399.17 L1347.23 398.93 L1348.45 394.38 L1348.84 395.20 L1349.95 394.97 L1349.95 395.26 L1350.44 396.36 L1351.45 396.18 L1352.04 394.22 L1353.65 389.32 L1353.69 388.93 L1353.69 389.11 L1353.69 388.96 L1355.25 396.23 L1355.94 400.67 L1355.94 401.12 L1355.94 400.64 L1356.85 396.40 L1358.45 388.99 L1358.93 386.66 L1358.93 386.89 L1358.93 386.84 L1360.06 386.97 L1361.66 383.68 L1362.68 383.27 L1362.68 383.31 L1362.68 383.73 L1363.26 388.50 L1364.87 401.83 L1364.92 402.10 L1364.92 402.22 L1364.92 402.09 L1366.42 394.53 L1366.42 394.89 L1366.42 394.63 L1366.47 394.31 L1368.07 401.83 L1369.42 404.44 L1369.42 404.17 L1369.67 404.70 L1370.16 406.75 L1371.28 391.56 L1371.66 387.21 L1371.66 387.20 L1372.41 386.42 L1372.88 385.58 L1374.48 384.84 L1375.41 383.11 L1375.41 382.70 L1375.41 382.96 L1376.09 382.50 L1377.69 384.03 L1378.40 383.18 L1379.29 383.29 L1379.90 383.42 L1380.65 388.35 L1380.89 388.36 L1381.40 393.21 L1382.14 397.77 L1382.50 397.33 L1383.64 396.75 L1384.10 397.18 L1384.39 396.48 L1385.14 396.49 L1385.70 399.69 L1387.30 412.50 L1388.88 424.68 L1388.88 425.04 L1388.88 425.09 L1388.91 425.22 L1390.38 446.36 L1390.38 446.77 L1390.38 446.15 L1390.51 445.98 L1392.11 450.35 L1393.72 453.13 L1394.12 453.99 L1394.12 453.87 L1394.12 454.27 L1395.32 448.23 L1396.92 442.38 L1398.52 434.45 L1399.37 431.38 L1399.37 431.80 L1399.37 431.45 L1400.13 434.43 L1401.73 442.59 L1403.33 448.22 L1403.86 451.14 L1403.86 450.68 L1403.86 450.84 L1404.94 450.42 L1406.54 450.31 L1406.85 451.86 L1406.85 451.66 L1406.85 451.57 L1408.14 456.26 L1409.10 459.30 L1409.74 459.72 L1409.85 459.93 L1409.85 460.34 L1411.35 462.79 L1412.95 462.99 L1414.55 465.91 L1415.84 466.73 L1415.84 466.81 L1415.84 466.87 L1416.16 466.90 L1417.76 467.17 L1419.36 467.68 L1420.96 467.61 L1421.83 468.72 L1421.83 468.05 L1421.83 468.23 L1422.57 467.06 L1424.17 465.85 L1425.77 464.67 L1427.07 462.62 L1427.07 463.07 L1427.07 462.81 L1427.38 464.44 L1428.98 463.54 L1430.58 465.47 L1432.18 469.62 L1433.79 469.12 L1433.81 469.26 L1433.81 468.90 L1433.81 468.64 L1435.39 469.40 L1436.99 469.32 L1438.59 469.26 L1440.20 470.21 L1441.29 470.46 L1441.29 470.43 L1441.29 470.33 L1441.80 471.12 L1443.40 470.94 L1444.29 473.02 L1444.29 472.48 L1444.29 472.78 L1445.01 472.23 L1446.61 471.91 L1448.21 472.83 L1449.81 471.62 L1450.28 471.06 L1451.42 470.85 L1451.78 471.89 L1451.78 471.51 L1453.02 471.96 L1454.62 470.86 L1456.23 472.66 L1456.27 472.74 L1456.27 472.55 L1456.27 472.75 L1457.83 470.38 L1459.26 468.27 L1459.43 468.33 L1460.01 470.07 L1461.03 471.88 L1461.51 473.28 L1461.51 473.56 L1461.51 473.53 L1462.64 472.07 L1464.24 469.50 L1465.84 466.66 L1466.75 465.92 L1466.75 465.84 L1467.45 466.00 L1467.50 465.53 L1469.05 465.27 L1470.65 463.63 L1471.24 463.10 L1471.24 463.20 L1471.24 463.29 L1472.25 465.25 L1472.74 466.66 L1473.86 466.04 L1475.46 465.34 L1475.74 465.22 L1475.74 465.44 L1477.06 464.14 L1477.23 464.64 L1478.67 461.69 L1480.27 458.32 L1480.98 457.02 L1480.98 457.10 L1481.73 455.99 L1481.87 455.36 L1483.47 453.33 L1485.08 452.29 L1485.47 451.88 L1485.47 451.85 L1485.47 451.41 L1486.68 453.10 L1488.28 451.99 L1489.21 451.04 L1489.21 451.19 L1489.88 452.18 L1489.96 450.88 L1491.49 452.64 L1493.09 453.68 L1494.69 454.17 L1496.30 456.94 L1496.70 457.85 L1496.70 457.95 L1496.70 457.92 L1497.90 460.05 L1499.50 461.62 L1501.10 464.13 L1502.71 466.27 L1504.19 467.25 L1504.19 467.53 L1504.19 467.50 L1504.31 467.29 L1505.91 468.79 L1507.52 469.10 L1509.12 468.53 L1510.72 468.96 L1511.67 469.98 L1511.67 469.82 L1511.67 469.76 L1512.32 469.27 L1513.93 466.59 L1514.67 465.79 L1514.67 465.72 L1514.67 465.93 L1515.53 465.16 L1517.13 466.26 L1518.74 465.90 L1520.34 464.16 L1521.94 465.63 L1522.16 465.82 L1522.16 466.01 L1522.16 465.78 L1523.54 467.52 L1525.15 467.68 L1526.65 469.83 L1526.75 469.42 L1528.35 469.25 L1529.64 469.56 L1529.64 469.62 L1529.96 468.67 L1531.56 468.71 L1533.16 468.31 L1534.76 468.38 L1535.63 468.69 L1535.63 468.75 L1535.63 468.76 L1536.37 469.03 L1537.97 470.37 L1538.63 471.94 L1538.63 472.01 L1538.63 471.90 L1539.57 471.99 L1541.17 467.86 L1542.78 468.75 L1544.38 467.01 L1545.98 465.07 L1547.59 466.14 L1548.36 463.44 L1548.36 463.96 L1548.36 463.83 L1549.19 464.82 L1550.79 468.06 L1552.39 470.63 L1552.85 472.01 L1552.85 471.86 L1552.85 471.62 L1554.00 470.35 L1555.60 470.19 L1557.20 468.40 L1557.35 469.25 L1558.81 465.71 L1560.41 464.21 L1561.09 461.24 L1561.09 461.46 L1561.09 461.31 L1562.01 460.16 L1563.61 456.18 L1565.22 454.61 L1565.58 453.85 L1566.33 455.91 L1566.33 456.33 L1566.82 458.25 L1568.42 462.36 L1568.58 462.90 L1568.58 463.18 L1568.58 463.01 L1570.03 458.44 L1571.57 453.38 L1571.63 453.45 L1573.07 450.91 L1573.07 451.13 L1573.23 449.75 L1574.83 450.53 L1576.44 446.38 L1578.04 444.08 L1578.31 444.15 L1578.31 444.16 L1578.31 444.02 L1579.64 451.42 L1581.25 456.89 L1581.31 457.76 L1581.31 457.60 L1581.31 457.86 L1582.85 456.71 L1584.45 456.29 L1585.05 455.43 L1585.05 455.31 L1585.05 455.56 L1586.05 457.51 L1587.66 459.37 L1589.26 462.68 L1589.54 463.63 L1589.54 463.96 L1589.54 463.75 L1590.86 464.76 L1592.46 465.75 L1594.03 465.87 L1594.07 465.86 L1595.53 467.18 L1595.53 467.23 L1595.67 467.38 L1597.27 468.88 L1598.88 470.38 L1600.02 470.44 L1600.02 470.28 L1600.02 470.43 L1600.48 469.82 L1601.52 469.17 L1601.52 469.06 L1602.08 467.97 L1603.68 467.23 L1604.52 466.61 L1605.29 467.96 L1606.89 467.38 L1608.49 468.93 L1610.10 469.35 L1611.70 469.29 L1612.00 470.25 L1612.00 470.38 L1612.00 470.58 L1613.30 471.82 L1614.90 471.53 L1616.51 470.89 L1618.11 472.10 L1619.49 472.03 L1619.49 472.03 L1619.49 471.97 L1619.71 471.28 L1621.32 468.79 L1622.49 466.94 L1622.49 466.67 L1622.49 466.60 L1622.92 466.61 L1624.52 465.27 L1626.12 465.74 L1627.73 466.25 L1627.73 465.83 L1627.73 466.18 L1627.73 467.02 L1627.73 544.5 L1012.25 544.5 Z" fill="#444674"/></svg>
<div style="position:absolute;left:271px;top:510.5px;width:8px;height:8px;background:#444674;border-radius:50%;"></div>
<div class="t" style="left:284.00px;top:508.54px;font-size:12px;color:#301A38;letter-spacing:-0.02px;">FCP</div>
<div style="position:absolute;left:317px;top:510.5px;width:8px;height:8px;background:#D6567F;border-radius:50%;"></div>
<div class="t" style="left:330.00px;top:508.54px;font-size:12px;color:#301A38;letter-spacing:-0.02px;">LCP</div>
<div style="position:absolute;left:362px;top:510.5px;width:8px;height:8px;background:#F2B712;border-radius:50%;"></div>
<div class="t" style="left:375.00px;top:508.54px;font-size:12px;color:#301A38;letter-spacing:-0.02px;">TTFB</div>
<div class="t" style="right:1392.20px;top:541.14px;font-size:12px;color:#80708F;letter-spacing:0.2px;">4s</div>
<div class="t" style="right:1392.20px;top:608.64px;font-size:12px;color:#80708F;letter-spacing:0.2px;">3s</div>
<div class="t" style="right:1392.20px;top:676.14px;font-size:12px;color:#80708F;letter-spacing:0.2px;">2s</div>
<div class="t" style="right:1392.20px;top:743.64px;font-size:12px;color:#80708F;letter-spacing:0.2px;">1s</div>
<div class="t" style="right:1392.20px;top:811.14px;font-size:12px;color:#80708F;letter-spacing:0.2px;">0</div>
<div class="t" style="left:45.30px;width:600px;text-align:center;top:829.24px;font-size:12px;color:#80708F;letter-spacing:0.2px;">Mar 31 12:00 AM</div>
<div class="t" style="left:134.20px;width:600px;text-align:center;top:829.24px;font-size:12px;color:#80708F;letter-spacing:0.2px;">Apr 1 12:00 AM</div>
<div class="t" style="left:312.40px;width:600px;text-align:center;top:829.24px;font-size:12px;color:#80708F;letter-spacing:0.2px;">Apr 3 12:00 AM</div>
<div class="t" style="left:491.90px;width:600px;text-align:center;top:829.24px;font-size:12px;color:#80708F;letter-spacing:0.2px;">Apr 5 12:00 AM</div>
<svg style="position:absolute;left:0px;top:0px;pointer-events:none;" width="1680" height="1383" viewBox="0 0 1680 1383"><path d="M296.00 547.00 H921.00" stroke="#F5F4F7" stroke-width="1"/><path d="M296.00 614.50 H921.00" stroke="#F5F4F7" stroke-width="1"/><path d="M296.00 682.00 H921.00" stroke="#F5F4F7" stroke-width="1"/><path d="M296.00 749.50 H921.00" stroke="#F5F4F7" stroke-width="1"/><path d="M296.00 817.00 H921.00" stroke="#80708F" stroke-width="1"/><path d="M345.30 817.00 V822.00" stroke="#80708F" stroke-width="1"/><path d="M434.20 817.00 V822.00" stroke="#80708F" stroke-width="1"/><path d="M612.40 817.00 V822.00" stroke="#80708F" stroke-width="1"/><path d="M791.90 817.00 V822.00" stroke="#80708F" stroke-width="1"/><path d="M793.5 724.5 V817" stroke="#D8D3DF" stroke-width="1"/><path d="M296.57 769.06 L300.67 768.24 L305.60 773.17 L310.53 771.53 L312.17 769.89 L317.09 765.78 L319.56 766.60 L322.02 756.75 L326.95 751.00 L333.51 740.33 L338.44 742.79 L341.72 744.43 L346.65 755.11 L350.76 756.75 L353.22 755.11 L360.61 756.75 L363.07 755.93 L367.18 760.85 L373.74 764.96 L377.03 768.24 L382.78 769.89 L387.70 768.24 L391.81 772.35 L396.73 773.17 L400.02 773.99 L404.12 766.60 L408.23 767.42 L411.51 756.75 L416.44 751.82 L421.36 742.79 L427.93 742.79 L432.86 749.36 L436.14 756.75 L441.07 756.75 L445.17 755.11 L451.74 755.93 L455.02 760.03 L460.77 764.14 L467.34 769.06 L472.27 768.24 L474.73 769.89 L478.01 770.71 L482.94 774.81 L486.22 772.35 L489.51 773.99 L493.61 771.53 L496.08 770.71 L499.36 760.85 L503.46 755.11 L506.75 758.39 L508.39 753.46 L513.32 749.36 L516.60 751.00 L520.71 746.08 L523.17 750.18 L528.10 749.36 L531.38 747.72 L533.02 751.82 L534.66 750.18 L539.59 753.46 L542.05 751.00 L546.16 752.64 L547.80 760.03 L549.44 750.18 L553.55 753.46 L555.19 751.00 L560.11 760.03 L562.58 758.39 L565.86 760.03 L569.15 758.39 L571.61 767.42 L574.89 760.03 L579.00 760.03 L582.28 760.03 L586.39 768.24 L588.85 759.21 L593.78 755.93 L596.24 759.21 L600.34 752.64 L603.63 756.75 L605.00 760.03 L609.11 751.82 L611.57 753.46 L614.03 750.18 L618.96 751.00 L622.24 751.82 L625.53 753.46 L629.63 751.82 L634.56 753.46 L640.30 751.82 L644.41 756.75 L647.69 760.03 L651.80 754.29 L654.26 760.03 L657.55 758.39 L660.83 759.21 L667.40 756.75 L670.68 754.29 L673.97 757.57 L678.89 750.18 L682.18 748.54 L683.82 751.82 L686.28 747.72 L692.03 739.51 L696.95 744.43 L703.52 755.11 L707.63 758.39 L712.55 755.93 L716.66 755.93 L721.58 758.39 L726.51 762.50 L731.44 764.96 L738.00 769.06 L744.57 769.06 L750.32 771.53 L753.60 773.17 L758.53 770.71 L762.64 763.32 L765.10 765.78 L768.38 756.75 L775.77 748.54 L781.52 742.79 L785.62 744.43 L790.55 751.82 L795.48 755.11 L799.58 755.93 L805.33 754.29 L810.25 756.75 L815.18 761.67 L820.11 764.14 L825.03 768.24 L829.14 769.06 L833.24 771.53 L838.99 770.71 L844.74 771.53 L848.84 767.42 L852.13 767.42 L855.41 756.75 L859.52 750.18 L862.80 751.82 L866.90 749.36 L869.37 741.15 L874.29 743.61 L882.50 753.46 L889.07 755.93 L895.64 756.75 L900.57 760.03 L907.13 764.14 L915.34 768.24 L920.27 767.42" stroke="#F2B712" fill="none" stroke-width="1.9" stroke-linejoin="round"/><path d="M296.57 730.48 L299.03 733.76 L300.67 730.48 L304.78 735.40 L307.24 738.69 L312.99 725.55 L315.45 726.37 L317.09 712.41 L319.23 663.15 L321.20 674.65 L322.84 709.95 L326.12 702.56 L328.10 676.29 L330.23 693.53 L333.51 684.50 L337.62 692.71 L340.90 694.35 L343.37 704.20 L346.65 715.70 L350.76 718.16 L355.68 714.06 L357.65 706.67 L359.79 712.41 L363.89 715.70 L368.82 726.37 L373.74 730.48 L378.67 734.58 L381.95 732.12 L386.06 730.48 L390.16 734.58 L395.09 735.40 L396.73 722.27 L398.37 728.83 L400.84 705.02 L402.48 706.67 L404.61 718.98 L405.76 713.23 L407.90 651.66 L409.87 712.41 L411.51 710.77 L413.48 686.96 L415.62 701.74 L417.26 697.64 L419.72 687.78 L423.00 691.89 L427.11 693.53 L429.57 697.64 L432.86 704.20 L436.14 712.41 L440.25 711.59 L441.89 716.52 L445.17 710.77 L449.28 712.41 L454.20 718.98 L458.31 724.73 L461.59 726.37 L464.88 728.83 L467.34 722.27 L469.31 728.83 L472.27 724.73 L474.73 730.48 L478.83 733.76 L482.12 739.51 L485.40 730.48 L487.87 735.40 L491.97 727.19 L495.25 673.00 L497.72 624.56 L501.00 664.79 L505.11 645.09 L509.21 603.22 L516.60 603.22 L519.06 605.68 L521.53 604.04 L523.17 647.55 L525.63 629.49 L528.10 634.42 L532.69 654.12 L535.48 636.88 L537.13 636.88 L539.92 657.41 L542.87 645.91 L545.34 649.20 L547.31 629.49 L551.08 668.90 L552.73 663.15 L555.19 627.03 L556.83 668.08 L560.94 631.95 L565.86 662.33 L569.15 647.55 L572.43 607.32 L575.71 604.86 L583.92 604.86 L588.03 603.22 L590.49 602.40 L604.45 603.22 L605.00 604.86 L608.28 613.89 L610.75 654.94 L612.88 620.46 L614.85 629.49 L616.49 629.49 L618.14 666.44 L622.24 657.41 L625.53 639.34 L627.17 670.54 L628.81 661.51 L632.09 667.26 L634.56 682.04 L637.02 663.97 L639.48 669.72 L641.95 656.58 L644.41 674.65 L647.69 622.10 L650.16 654.12 L654.26 635.24 L657.22 673.83 L659.52 648.37 L661.65 652.48 L663.29 648.37 L666.58 687.78 L668.22 646.73 L670.35 677.93 L672.32 628.67 L675.61 631.95 L677.25 690.25 L679.71 694.35 L683.00 673.00 L685.13 691.89 L687.10 683.68 L692.85 683.68 L698.60 701.74 L703.52 709.13 L706.81 718.16 L711.73 717.34 L715.02 708.31 L719.12 706.67 L720.76 715.70 L724.87 720.62 L728.97 726.37 L731.44 731.30 L736.36 732.94 L740.47 726.37 L745.39 730.48 L750.32 730.48 L753.60 735.40 L756.07 729.66 L758.53 722.27 L761.81 720.62 L764.61 651.66 L767.07 715.70 L769.20 705.85 L772.49 700.92 L777.41 695.17 L781.52 690.25 L788.09 700.92 L792.19 713.23 L795.48 714.88 L801.22 714.88 L804.51 711.59 L809.43 709.13 L811.90 718.98 L816.82 722.27 L822.57 730.48 L824.21 719.80 L825.85 727.19 L828.32 717.34 L831.27 731.30 L833.57 707.49 L836.53 731.30 L841.45 730.48 L845.56 732.12 L848.02 720.62 L851.31 718.98 L853.77 675.47 L856.23 706.67 L859.52 701.74 L862.80 702.56 L865.26 694.35 L868.55 687.78 L872.65 686.14 L877.58 698.46 L882.50 711.59 L884.97 709.13 L887.43 712.41 L889.89 709.13 L894.00 714.06 L900.57 719.80 L905.49 725.55 L911.24 730.48 L915.34 722.27 L920.27 729.66" stroke="#444674" fill="none" stroke-width="1.9" stroke-linejoin="round"/><path d="M296.57 635.24 L299.03 640.16 L300.67 635.24 L302.32 666.44 L303.96 661.51 L306.09 671.36 L308.06 664.79 L310.53 662.33 L312.17 658.23 L313.81 661.51 L317.09 646.73 L318.74 626.21 L321.20 632.78 L326.12 623.74 L328.59 607.32 L331.05 606.50 L333.51 613.89 L335.65 594.19 L337.62 606.50 L339.59 598.29 L341.72 614.71 L343.37 607.32 L346.65 618.82 L350.76 625.39 L352.40 629.49 L354.86 625.39 L358.14 625.39 L359.79 622.10 L362.25 630.31 L363.89 627.03 L369.64 639.34 L372.10 641.81 L374.56 639.34 L378.67 643.45 L381.95 651.66 L384.42 658.23 L387.70 654.94 L389.34 667.26 L391.81 640.16 L393.45 639.34 L395.09 645.09 L396.73 641.81 L400.84 648.37 L404.94 630.31 L407.41 622.10 L409.05 611.43 L411.51 615.53 L414.79 600.76 L417.26 605.68 L418.90 572.84 L420.87 564.63 L423.00 583.51 L425.47 584.33 L428.75 605.68 L431.22 590.08 L433.68 602.40 L438.60 602.40 L441.89 608.97 L445.17 599.93 L447.64 609.79 L450.92 609.79 L454.20 612.25 L457.49 615.53 L460.77 622.92 L464.06 627.03 L467.34 631.95 L470.62 639.34 L477.19 641.81 L482.12 653.30 L485.40 652.48 L487.04 648.37 L489.51 653.30 L491.97 643.45 L495.25 642.63 L497.72 635.24 L500.18 608.97 L501.82 623.74 L504.29 593.37 L506.75 628.67 L508.39 572.84 L510.85 581.05 L512.50 606.50 L514.14 562.99 L517.42 589.26 L519.56 570.38 L521.53 589.26 L523.99 576.95 L527.27 605.68 L530.56 575.30 L533.02 601.58 L537.95 582.69 L541.23 594.19 L543.69 612.25 L546.16 604.04 L549.44 591.72 L551.08 628.67 L553.55 602.40 L556.83 607.32 L559.29 630.31 L561.76 613.89 L564.22 648.37 L566.68 610.61 L569.15 636.88 L572.43 618.82 L576.54 631.13 L579.00 597.47 L583.10 645.09 L585.57 602.40 L588.03 643.45 L590.49 592.55 L592.96 607.32 L596.24 618.82 L598.70 607.32 L601.17 594.19 L603.63 608.97 L605.00 585.16 L607.46 610.61 L610.75 592.55 L613.21 594.19 L616.49 608.14 L618.14 581.87 L619.78 604.04 L621.75 586.80 L623.88 610.61 L625.53 594.19 L628.81 609.79 L632.91 597.47 L635.38 611.43 L637.84 602.40 L640.30 613.89 L642.77 598.29 L645.23 599.93 L646.87 613.07 L648.02 599.93 L649.33 632.78 L651.80 602.40 L654.26 608.97 L657.22 633.60 L659.19 623.74 L661.65 622.92 L664.11 606.50 L666.58 612.25 L669.04 602.40 L673.14 611.43 L678.07 595.01 L680.53 599.11 L683.00 608.14 L684.64 585.98 L686.77 592.55 L688.74 581.05 L690.39 584.33 L692.36 571.20 L694.49 598.29 L696.13 586.80 L699.42 592.55 L702.70 604.04 L705.16 601.58 L707.63 608.97 L712.55 604.04 L715.02 607.32 L717.48 604.86 L719.94 610.61 L723.23 615.53 L726.51 622.92 L729.79 626.21 L734.72 627.03 L737.18 640.99 L738.83 637.70 L742.93 641.81 L744.57 647.55 L747.86 640.16 L750.32 647.55 L752.78 643.45 L755.25 642.63 L758.53 645.91 L761.81 645.09 L763.46 630.31 L765.10 637.70 L767.56 618.00 L771.67 602.40 L773.31 603.22 L775.77 589.26 L779.06 604.04 L783.16 589.26 L785.62 597.47 L787.27 592.55 L792.19 605.68 L794.66 602.40 L796.30 608.14 L798.76 599.11 L802.04 615.53 L804.51 602.40 L809.43 600.76 L811.90 610.61 L816.00 613.89 L819.29 621.28 L823.39 625.39 L826.67 633.60 L829.14 628.67 L831.60 640.16 L834.06 630.31 L836.53 640.16 L838.99 638.52 L842.27 645.91 L847.20 641.81 L852.13 631.95 L854.59 617.18 L857.87 611.43 L861.16 610.61 L864.44 605.68 L866.90 605.68 L869.37 586.80 L872.65 590.90 L877.58 596.65 L880.04 589.26 L884.15 608.97 L885.79 595.01 L889.07 606.50 L894.00 604.04 L897.28 618.82 L898.92 612.25 L902.21 620.46 L905.49 620.46 L907.96 634.42 L910.42 628.67 L912.88 633.60 L917.81 629.49 L920.27 620.46" stroke="#D6567F" fill="none" stroke-width="1.9" stroke-linejoin="round"/><circle cx="792.3" cy="754.3" r="2.4" fill="#fff" stroke="#F2B712" stroke-width="1.2"/></svg>
<svg style="position:absolute;left:0px;top:0px;pointer-events:none;" width="1680" height="1383" viewBox="0 0 1680 1383"><path d="M1132.64 686.68 L1141.72 683.96 L1157.85 685.67 L1157.85 696.46 L1162.39 697.26 L1168.44 702.31 L1163.40 698.78 L1157.35 697.26 L1150.29 696.26 L1143.23 699.79 L1135.17 703.31 L1142.22 698.27 L1134.16 695.25 L1134.66 692.22 L1132.14 690.21 Z" fill="#6C5FC7" fill-rule="evenodd" stroke="#6C5FC7" stroke-width="0.3"/><path d="M1119.03 687.18 L1122.06 687.69 L1128.11 689.70 L1125.08 691.42 L1119.54 689.70 Z" fill="#B0A7E2" fill-rule="evenodd" stroke="#B0A7E2" stroke-width="0.3"/><path d="M1157.85 685.67 L1167.43 686.38 L1175.50 688.39 L1185.58 687.38 L1201.71 688.39 L1209.78 686.68 L1215.83 689.20 L1223.89 691.42 L1231.96 695.25 L1235.99 698.27 L1240.03 703.31 L1243.05 705.33 L1246.07 711.38 L1241.03 712.39 L1235.99 714.41 L1230.95 712.39 L1229.94 715.41 L1221.88 716.42 L1216.33 717.93 L1214.82 712.39 L1203.73 709.87 L1176.50 709.87 L1175.50 711.38 L1171.46 705.33 L1165.41 699.28 L1158.36 696.46 Z M1204.74 697.26 L1211.79 695.25 L1216.84 693.23 L1223.89 695.25 L1226.92 698.27 L1221.88 705.33 L1219.86 706.84 L1215.83 703.31 L1208.77 700.29 Z" fill="#B0A7E2" fill-rule="evenodd" stroke="#B0A7E2" stroke-width="0.3"/><path d="M1209.78 681.64 L1215.83 681.94 L1227.93 685.67 L1234.98 689.00 L1230.95 692.02 L1223.89 691.01 L1214.82 687.99 L1209.78 685.17 Z" fill="#B0A7E2" fill-rule="evenodd" stroke="#B0A7E2" stroke-width="0.3"/><path d="M1203.73 672.86 L1215.83 670.85 L1235.99 669.64 L1228.93 674.28 L1221.88 676.29 L1211.79 677.30 L1205.74 675.28 Z" fill="#B0A7E2" fill-rule="evenodd" stroke="#B0A7E2" stroke-width="0.3"/><path d="M1174.49 681.94 L1185.58 680.12 L1194.65 681.13 L1203.73 684.96 L1198.69 686.68 L1185.58 686.17 L1177.51 684.96 Z" fill="#B0A7E2" fill-rule="evenodd" stroke="#B0A7E2" stroke-width="0.3"/><path d="M1185.58 676.29 L1195.66 674.58 L1202.72 678.11 L1193.64 679.32 L1187.60 678.71 Z" fill="#B0A7E2" fill-rule="evenodd" stroke="#B0A7E2" stroke-width="0.3"/><path d="M1228.93 671.05 L1285.40 671.25 L1278.34 677.10 L1274.31 685.17 L1266.24 689.20 L1256.16 695.25 L1250.11 691.21 L1244.06 685.17 L1235.99 676.09 Z" fill="#B0A7E2" fill-rule="evenodd" stroke="#B0A7E2" stroke-width="0.3"/><path d="M1175.50 710.37 L1203.73 710.37 L1214.82 712.39 L1216.33 717.93 L1221.88 716.42 L1229.94 715.41 L1230.95 712.39 L1231.96 713.40 L1229.94 717.43 L1224.90 719.45 L1223.39 723.48 L1222.88 727.51 L1218.85 730.54 L1217.34 732.55 L1218.35 737.60 L1216.33 735.58 L1214.82 732.55 L1210.79 732.05 L1205.74 733.06 L1201.71 735.58 L1200.70 735.58 L1195.66 730.54 L1187.60 730.54 L1183.56 729.53 L1178.52 724.49 L1175.50 718.44 Z" fill="#6C5FC7" fill-rule="evenodd" stroke="#6C5FC7" stroke-width="0.3"/><path d="M1183.56 729.53 L1187.60 730.54 L1195.66 730.54 L1201.71 735.58 L1203.73 741.63 L1207.76 746.67 L1211.79 743.64 L1214.82 748.69 L1215.83 752.72 L1219.86 757.76 L1215.83 756.75 L1208.77 750.70 L1200.70 747.68 L1194.65 741.63 L1189.61 735.58 L1186.59 737.60 L1183.56 731.55 Z" fill="#B0A7E2" fill-rule="evenodd" stroke="#B0A7E2" stroke-width="0.3"/><path d="M1216.84 741.12 L1225.91 742.64 L1232.97 745.66 L1224.90 744.85 Z" fill="#B0A7E2" fill-rule="evenodd" stroke="#B0A7E2" stroke-width="0.3"/><path d="M1225.91 754.74 L1238.01 755.74 L1246.07 761.79 L1249.10 767.84 L1263.22 773.89 L1263.72 776.92 L1260.19 783.98 L1258.17 794.06 L1250.11 799.10 L1246.07 806.16 L1242.04 812.21 L1235.99 817.25 L1231.96 822.29 L1230.95 828.34 L1232.97 832.37 L1226.92 831.36 L1224.40 824.31 L1225.91 816.24 L1226.92 806.16 L1228.93 796.07 L1229.44 788.01 L1223.89 783.98 L1218.85 773.89 L1218.85 768.85 L1221.88 761.79 Z" fill="#B0A7E2" fill-rule="evenodd" stroke="#B0A7E2" stroke-width="0.3"/><path d="M1339.46 688.18 L1348.53 687.68 L1356.60 686.17 L1365.67 684.15 L1370.71 683.14 L1374.74 684.15 L1385.83 679.11 L1400.94 677.09 L1411.02 678.61 L1421.10 681.13 L1437.23 682.64 L1451.34 684.65 L1469.48 685.66 L1478.55 686.37 L1478.55 692.21 L1471.49 693.72 L1464.44 694.43 L1460.41 697.25 L1451.34 698.26 L1442.27 700.28 L1435.21 702.29 L1441.24 705.29 L1441.61 710.56 L1438.45 713.73 L1434.01 714.37 L1430.84 716.26 L1429.25 720.07 L1428.31 725.76 L1426.09 727.03 L1424.51 723.87 L1423.24 720.69 L1420.70 720.07 L1416.90 721.96 L1418.17 725.14 L1420.70 727.03 L1420.07 732.74 L1418.17 738.44 L1414.37 740.35 L1410.56 742.24 L1408.03 742.24 L1405.49 746.05 L1408.03 751.12 L1406.76 754.92 L1404.23 756.83 L1402.96 753.65 L1400.42 751.76 L1398.84 750.49 L1397.89 752.38 L1399.78 759.36 L1401.69 763.16 L1398.84 761.26 L1397.25 755.56 L1395.98 751.76 L1394.08 748.58 L1392.19 741.61 L1390.28 737.17 L1387.12 739.08 L1383.81 743.61 L1380.79 750.67 L1376.75 756.92 L1374.24 750.67 L1370.71 742.61 L1366.68 737.57 L1360.63 736.36 L1359.62 725.47 L1352.57 721.44 L1351.56 717.41 L1350.55 710.35 L1345.51 709.35 L1344.50 707.33 L1339.46 705.31 Z" fill="#B0A7E2" stroke="#B0A7E2" stroke-width="0.3"/><path d="M1289.07 728.50 L1294.11 724.97 L1302.17 723.96 L1310.24 725.47 L1318.30 729.50 L1327.37 730.51 L1332.41 730.51 L1335.43 737.57 L1340.47 745.63 L1344.50 752.68 L1349.54 753.69 L1346.52 761.75 L1340.47 768.81 L1338.46 773.85 L1339.46 781.91 L1337.45 785.94 L1332.41 794.01 L1328.38 801.06 L1322.33 806.10 L1318.30 808.12 L1315.28 801.06 L1312.25 791.99 L1311.24 781.91 L1310.24 771.83 L1308.22 765.79 L1304.19 761.75 L1295.12 760.75 L1291.09 760.75 L1286.05 755.71 L1283.02 749.66 L1282.52 741.60 L1286.05 735.55 Z" fill="#B0A7E2" stroke="#B0A7E2" stroke-width="0.3"/><path d="M1344.50 784.94 L1348.53 782.92 L1346.52 793.00 L1343.50 797.03 L1342.49 791.99 Z" fill="#B0A7E2" stroke="#B0A7E2" stroke-width="0.3"/><path d="M1455.37 698.26 L1463.43 694.23 L1460.41 701.28 L1456.38 706.32 Z" fill="#B0A7E2" stroke="#B0A7E2" stroke-width="0.3"/><path d="M1440.25 705.31 L1442.27 704.81 L1441.26 712.37 L1439.75 711.36 Z" fill="#B0A7E2" stroke="#B0A7E2" stroke-width="0.3"/><path d="M1429.25 730.21 L1432.43 726.72 L1436.54 724.82 L1439.39 720.69 L1439.72 716.26 L1443.84 716.58 L1440.99 718.16 L1440.35 721.96 L1438.45 725.76 L1434.65 727.36 L1430.84 730.52 Z" fill="#B0A7E2" stroke="#B0A7E2" stroke-width="0.3"/><path d="M1440.99 704.85 L1442.38 705.49 L1441.93 714.37 L1440.47 713.73 Z" fill="#B0A7E2" stroke="#B0A7E2" stroke-width="0.3"/><path d="M1418.80 738.44 L1420.19 739.08 L1419.44 741.93 Z" fill="#B0A7E2" stroke="#B0A7E2" stroke-width="0.3"/><path d="M1378.97 756.72 L1380.28 759.24 L1379.27 760.24 Z" fill="#B0A7E2" stroke="#B0A7E2" stroke-width="0.3"/><path d="M1394.90 761.75 L1400.94 765.79 L1404.97 773.85 L1414.05 777.38 L1404.97 775.86 L1398.93 768.81 Z" fill="#B0A7E2" stroke="#B0A7E2" stroke-width="0.3"/><path d="M1409.01 766.79 L1415.05 761.75 L1417.07 767.80 L1413.04 771.83 Z" fill="#B0A7E2" stroke="#B0A7E2" stroke-width="0.3"/><path d="M1418.58 768.81 L1422.11 769.82 L1420.09 773.85 Z" fill="#B0A7E2" stroke="#B0A7E2" stroke-width="0.3"/><path d="M1419.44 746.05 L1421.02 746.68 L1420.39 751.12 L1422.60 752.38 L1425.26 757.45 L1423.99 760.30 L1421.97 756.31 L1419.94 752.38 Z" fill="#B0A7E2" stroke="#B0A7E2" stroke-width="0.3"/><path d="M1431.18 768.81 L1439.24 769.82 L1448.31 778.89 L1441.26 777.88 L1434.20 773.85 Z" fill="#B0A7E2" stroke="#B0A7E2" stroke-width="0.3"/><path d="M1413.04 795.01 L1421.10 786.95 L1428.16 782.92 L1437.23 783.93 L1441.26 780.90 L1446.30 789.97 L1451.34 799.05 L1451.34 806.10 L1446.30 812.15 L1441.26 812.15 L1437.23 806.10 L1431.18 804.08 L1423.12 806.10 L1415.05 808.12 L1413.04 801.06 Z" fill="#B0A7E2" stroke="#B0A7E2" stroke-width="0.3"/><path d="M1443.78 816.18 L1447.30 816.18 L1445.29 818.19 Z" fill="#B0A7E2" stroke="#B0A7E2" stroke-width="0.3"/><path d="M1465.95 821.72 L1471.49 816.18 L1476.53 812.15 L1474.01 815.17 Z" fill="#B0A7E2" stroke="#B0A7E2" stroke-width="0.3"/><path d="M1280.00 690.04 L1284.17 690.56 L1283.13 692.13 L1280.00 692.39 Z" fill="#B0A7E2" stroke="#B0A7E2" stroke-width="0.3"/><path d="M1310.26 674.39 L1324.34 673.35 L1316.52 676.48 L1314.43 677.00 Z" fill="#B0A7E2" stroke="#B0A7E2" stroke-width="0.3"/><path d="M1280.00 671.78 L1285.74 671.68 L1282.09 672.82 L1280.00 673.09 Z" fill="#B0A7E2" stroke="#B0A7E2" stroke-width="0.3"/><path d="M1350.94 683.26 L1366.59 677.52 L1354.60 683.78 Z" fill="#B0A7E2" stroke="#B0A7E2" stroke-width="0.3"/><path d="M1304.52 694.99 L1308.17 691.60 L1313.39 687.95 L1319.65 685.34 L1323.82 684.82 L1323.30 689.52 L1318.60 691.60 L1316.52 695.78 L1314.43 698.91 L1313.39 702.04 L1310.78 700.99 L1310.26 698.39 L1305.56 698.39 Z" fill="#B0A7E2" stroke="#B0A7E2" stroke-width="0.3"/><path d="M1323.82 684.82 L1328.51 684.41 L1332.16 686.39 L1339.47 688.21 L1339.47 717.16 L1337.38 715.08 L1333.21 714.56 L1330.08 712.99 L1326.95 714.56 L1326.17 718.73 L1322.78 719.77 L1321.73 723.95 L1319.65 721.86 L1318.60 719.25 L1315.47 718.73 L1312.34 715.08 L1309.21 714.03 L1311.30 717.16 L1315.47 720.82 L1314.95 721.86 L1311.30 719.25 L1308.17 716.64 L1306.08 714.56 L1304.52 715.08 L1302.43 716.12 L1300.87 717.69 L1297.21 721.86 L1293.04 724.47 L1290.43 723.95 L1289.91 717.16 L1293.56 716.64 L1297.74 716.64 L1295.13 710.91 L1301.39 708.30 L1304.00 704.65 L1307.65 702.56 L1309.21 700.99 L1311.30 702.56 L1316.52 702.56 L1321.21 702.56 L1323.30 698.39 L1321.21 696.30 L1324.34 695.78 L1320.69 692.13 L1322.78 689.52 Z" fill="#B0A7E2" stroke="#B0A7E2" stroke-width="0.3"/><path d="M1339.47 688.21 L1344.16 687.95 L1350.42 687.43 L1360.86 685.87 L1366.07 683.78 L1368.68 682.21 L1371.81 683.26 L1370.77 689.00 L1373.90 686.91 L1380.16 681.17 L1390.02 679.08 L1390.02 717.16 L1353.03 710.91 L1347.81 710.38 L1345.21 717.16 L1339.47 717.16 Z" fill="#B0A7E2" stroke="#B0A7E2" stroke-width="0.3"/><path d="M1293.56 699.43 L1295.65 699.95 L1299.82 706.21 L1298.26 707.25 L1294.61 707.78 L1295.65 704.65 L1294.08 701.52 Z" fill="#B0A7E2" stroke="#B0A7E2" stroke-width="0.3"/><path d="M1289.91 704.12 L1292.52 703.08 L1292.52 706.21 L1289.65 706.21 Z" fill="#B0A7E2" stroke="#B0A7E2" stroke-width="0.3"/><path d="M1307.65 718.21 L1308.95 718.47 L1308.69 721.34 L1307.65 721.08 Z" fill="#B0A7E2" stroke="#B0A7E2" stroke-width="0.3"/><path d="M1311.30 722.90 L1314.43 723.16 L1313.39 724.21 Z" fill="#B0A7E2" stroke="#B0A7E2" stroke-width="0.3"/><path d="M1325.91 719.25 L1332.16 718.73 L1342.60 719.77 L1343.12 723.42 L1332.16 723.95 L1326.95 724.47 L1325.91 721.86 Z" fill="#B0A7E2" stroke="#B0A7E2" stroke-width="0.3"/><path d="M1339.47 717.16 L1345.21 717.16 L1347.29 721.86 L1343.12 721.86 L1341.03 719.25 Z" fill="#B0A7E2" stroke="#B0A7E2" stroke-width="0.3"/><path d="M1340.51 724.47 L1344.68 722.38 L1346.77 730.73 L1344.68 733.34 L1342.60 732.29 L1338.42 729.68 Z" fill="#B0A7E2" stroke="#B0A7E2" stroke-width="0.3"/><path d="M1335.29 724.99 L1340.51 724.47 L1339.47 729.16 L1335.29 729.68 Z" fill="#DAD5E0" stroke="#DAD5E0" stroke-width="0.3"/><path d="M1334.25 732.81 L1338.42 729.68 L1342.60 732.29 L1346.77 732.81 L1349.90 737.51 L1355.64 736.99 L1358.25 741.16 L1354.07 746.38 L1346.25 748.46 L1342.60 750.03 L1338.95 746.38 L1335.29 738.03 Z" fill="#B0A7E2" stroke="#B0A7E2" stroke-width="0.3"/><path d="M1359.81 724.47 L1368.68 722.90 L1371.29 727.60 L1368.68 733.86 L1365.55 738.03 L1361.90 736.99 L1360.33 732.81 Z" fill="#B0A7E2" stroke="#B0A7E2" stroke-width="0.3"/><path d="M1344.16 721.34 L1347.81 721.34 L1351.99 723.95 L1359.81 724.47 L1360.33 732.81 L1361.90 736.99 L1356.68 737.51 L1350.42 732.81 L1346.77 728.64 Z" fill="#DAD5E0" stroke="#DAD5E0" stroke-width="0.3"/><path d="M1311.82 708.30 L1316.52 708.04 L1317.56 709.86 L1313.39 710.38 Z" fill="#DAD5E0" stroke="#DAD5E0" stroke-width="0.3"/><path d="M1368.69 739.58 L1373.73 727.49 L1378.77 730.51 L1385.83 738.57 L1386.83 739.78 L1383.81 743.61 L1380.79 750.67 L1376.75 756.72 L1374.24 750.67 L1370.71 742.61 Z" fill="#A69BDA" stroke="#fff" stroke-width="0.5"/><path d="M1314.27 761.75 L1322.33 758.73 L1328.38 762.76 L1329.39 769.82 L1328.38 778.89 L1324.35 780.90 L1320.31 775.86 L1313.26 773.85 L1311.24 770.83 Z" fill="#DAD5E0" stroke="#fff" stroke-width="0.5"/><path d="M1314.27 758.73 L1322.33 755.71 L1332.41 755.71 L1333.42 761.75 L1326.36 762.76 L1320.31 759.74 Z" fill="#DAD5E0" stroke="#fff" stroke-width="0.5"/><path d="M1291.09 755.71 L1295.12 756.21 L1295.12 760.75 L1291.09 760.75 Z" fill="#DAD5E0" stroke="#fff" stroke-width="0.5"/><path d="M1342.49 753.69 L1347.53 754.20 L1345.51 757.22 Z" fill="#DAD5E0" stroke="#fff" stroke-width="0.5"/><path d="M1424.63 720.69 L1427.04 718.92 L1429.25 720.69 L1428.31 725.76 L1426.09 727.03 L1424.82 724.50 Z" fill="#DAD5E0" stroke="#fff" stroke-width="0.5"/><path d="M1399.94 742.61 L1402.96 744.62 L1401.95 747.14 Z" fill="#DAD5E0" stroke="#fff" stroke-width="0.5"/><path d="M1345.51 710.35 L1366.68 702.79 L1384.82 710.35 L1400.94 706.32 L1419.08 705.31 L1428.16 711.36" fill="none" stroke="#fff" stroke-width="0.5"/><path d="M1386.83 711.36 L1395.90 717.41 L1411.02 715.39 L1418.08 711.36" fill="none" stroke="#fff" stroke-width="0.5"/><path d="M1324.35 730.51 L1324.35 741.60 L1336.44 741.60" fill="none" stroke="#fff" stroke-width="0.5"/><path d="M1309.23 725.47 L1309.23 737.57 L1313.26 740.59 L1313.26 758.73" fill="none" stroke="#fff" stroke-width="0.5"/><path d="M1292.09 739.58 L1302.17 744.62 L1313.26 740.59" fill="none" stroke="#fff" stroke-width="0.5"/><path d="M1291.09 747.64 L1302.17 744.62" fill="none" stroke="#fff" stroke-width="0.5"/><path d="M1336.44 741.60 L1336.44 755.71" fill="none" stroke="#fff" stroke-width="0.5"/><path d="M1324.35 741.60 L1322.33 755.71" fill="none" stroke="#fff" stroke-width="0.5"/><path d="M1319.31 785.94 L1320.31 773.85" fill="none" stroke="#fff" stroke-width="0.5"/><path d="M1311.24 787.96 L1320.31 787.96 L1328.38 794.01" fill="none" stroke="#fff" stroke-width="0.5"/><path d="M1319.31 788.97 L1318.30 801.06" fill="none" stroke="#fff" stroke-width="0.5"/><path d="M1419.08 717.41 L1428.16 711.36" fill="none" stroke="#fff" stroke-width="0.5"/><path d="M1360.63 736.56 L1368.69 739.58" fill="none" stroke="#fff" stroke-width="0.5"/><path d="M1386.83 739.78 L1395.90 734.54 L1406.99 744.62" fill="none" stroke="#fff" stroke-width="0.5"/><path d="M1290.43 716.64 L1297.74 716.64" fill="none" stroke="#fff" stroke-width="0.5"/><path d="M1305.56 704.65 L1305.04 709.86 L1306.08 715.08" fill="none" stroke="#fff" stroke-width="0.5"/><path d="M1313.39 703.60 L1313.91 710.38" fill="none" stroke="#fff" stroke-width="0.5"/><path d="M1322.78 702.56 L1323.30 711.95" fill="none" stroke="#fff" stroke-width="0.5"/><path d="M1328.51 685.34 L1330.08 694.21 L1326.95 697.34 L1330.08 704.65 L1338.42 709.86 L1337.38 714.56" fill="none" stroke="#fff" stroke-width="0.5"/><path d="M1345.21 710.38 L1358.25 704.65 L1368.68 702.56 L1384.33 709.34" fill="none" stroke="#fff" stroke-width="0.5"/><path d="M1323.30 711.95 L1332.16 710.38 L1338.42 709.86" fill="none" stroke="#fff" stroke-width="0.5"/><path d="M1309.21 711.95 L1321.73 710.91" fill="none" stroke="#fff" stroke-width="0.5"/><path d="M1316.52 714.56 L1324.86 717.16" fill="none" stroke="#fff" stroke-width="0.5"/><path d="M1313.91 687.95 L1317.56 696.30" fill="none" stroke="#fff" stroke-width="0.5"/><path d="M1323.30 685.87 L1321.73 689.52" fill="none" stroke="#fff" stroke-width="0.5"/><path d="M1308.17 704.65 L1311.30 706.73 L1313.39 703.60" fill="none" stroke="#fff" stroke-width="0.5"/><path d="M1325.91 702.56 L1330.08 704.65" fill="none" stroke="#fff" stroke-width="0.5"/><path d="M1338.42 729.68 L1346.77 732.81" fill="none" stroke="#fff" stroke-width="0.5"/><path d="M1359.81 724.47 L1360.33 732.81" fill="none" stroke="#fff" stroke-width="0.5"/><path d="M1368.68 722.90 L1371.29 727.60" fill="none" stroke="#fff" stroke-width="0.5"/><path d="M1225.91 775.91 L1233.98 778.93 L1240.03 787.00 L1245.07 798.09" fill="none" stroke="#fff" stroke-width="0.5"/><path d="M1221.88 761.79 L1233.98 764.82 L1241.03 761.79" fill="none" stroke="#fff" stroke-width="0.5"/><path d="M1229.94 794.06 L1235.99 796.07 L1242.04 800.11" fill="none" stroke="#fff" stroke-width="0.5"/><path d="M1225.91 770.87 L1224.90 783.98" fill="none" stroke="#fff" stroke-width="0.5"/><path d="M1230.95 794.06 L1228.93 822.29 L1226.92 830.36" fill="none" stroke="#fff" stroke-width="0.5"/><path d="M1157.85 685.67 L1157.85 696.46 L1165.41 699.28 L1175.50 710.88 L1203.73 710.37 L1214.82 712.39 L1216.33 717.93 L1221.88 716.42 L1229.94 715.41 L1230.95 712.39" fill="none" stroke="#fff" stroke-width="0.5"/><path d="M1332.16 732.29 L1335.29 738.03 L1338.42 744.81 L1341.03 750.03" fill="none" stroke="#fff" stroke-width="1.2"/></svg>
<div class="t" style="left:1311.50px;width:600px;text-align:center;top:652.04px;font-size:12px;color:#301A38;">High</div>
<div style="position:absolute;left:1601.5px;top:673.7px;width:20px;height:139.7px;background:linear-gradient(180deg,#6C5FC7 0%,#8073B8 100%);border-radius:3px;"></div>
<div class="t" style="left:1311.50px;width:600px;text-align:center;top:823.74px;font-size:12px;color:#301A38;">Low</div>
<div style="position:absolute;left:271px;top:918.5px;width:8px;height:8px;background:#444674;border-radius:50%;"></div>
<div class="t" style="left:284.00px;top:916.54px;font-size:12px;color:#301A38;letter-spacing:-0.02px;">count_unique<span style="margin:0 1.3px">(</span>release<span style="margin:0 1.3px">)</span></div>
<div class="t" style="right:1390.00px;top:949.14px;font-size:12px;color:#80708F;letter-spacing:0.2px;">80</div>
<div class="t" style="right:1390.00px;top:1016.52px;font-size:12px;color:#80708F;letter-spacing:0.2px;">60</div>
<div class="t" style="right:1390.00px;top:1083.89px;font-size:12px;color:#80708F;letter-spacing:0.2px;">40</div>
<div class="t" style="right:1390.00px;top:1151.27px;font-size:12px;color:#80708F;letter-spacing:0.2px;">20</div>
<div class="t" style="right:1390.00px;top:1218.64px;font-size:12px;color:#80708F;letter-spacing:0.2px;">0</div>
<div class="t" style="left:212.40px;width:600px;text-align:center;top:1236.74px;font-size:12px;color:#80708F;letter-spacing:0.2px;">Apr 1 12:00 AM</div>
<div class="t" style="left:373.50px;width:600px;text-align:center;top:1236.74px;font-size:12px;color:#80708F;letter-spacing:0.2px;">Apr 3 12:00 AM</div>
<div class="t" style="left:533.30px;width:600px;text-align:center;top:1236.74px;font-size:12px;color:#80708F;letter-spacing:0.2px;">Apr 5 12:00 AM</div>
<svg style="position:absolute;left:0px;top:0px;pointer-events:none;" width="1680" height="1383" viewBox="0 0 1680 1383"><path d="M298.50 955.00 H921.00" stroke="#F5F4F7" stroke-width="1"/><path d="M298.50 1022.38 H921.00" stroke="#F5F4F7" stroke-width="1"/><path d="M298.50 1089.75 H921.00" stroke="#F5F4F7" stroke-width="1"/><path d="M298.50 1157.12 H921.00" stroke="#F5F4F7" stroke-width="1"/><path d="M298.50 1224.50 H921.00" stroke="#80708F" stroke-width="1"/><path d="M432.20 1224.50 V1229.50" stroke="#80708F" stroke-width="1"/><path d="M512.40 1224.50 V1229.50" stroke="#80708F" stroke-width="1"/><path d="M673.50 1224.50 V1229.50" stroke="#80708F" stroke-width="1"/><path d="M833.30 1224.50 V1229.50" stroke="#80708F" stroke-width="1"/><rect x="301.20" y="1086.38" width="55.1" height="138.12" fill="#444674"/><rect x="381.40" y="985.32" width="55.1" height="239.18" fill="#444674"/><rect x="461.60" y="981.95" width="55.1" height="242.55" fill="#444674"/><rect x="541.80" y="1089.75" width="55.1" height="134.75" fill="#444674"/><rect x="622.00" y="1086.38" width="55.1" height="138.12" fill="#444674"/><rect x="702.20" y="965.11" width="55.1" height="259.39" fill="#444674"/><rect x="782.40" y="992.06" width="55.1" height="232.44" fill="#444674"/><rect x="862.60" y="1022.38" width="55.1" height="202.12" fill="#444674"/><path d="M298.5 1224.5 H921" stroke="#80708F" stroke-width="1"/></svg>
<div style="position:absolute;left:979px;top:918.5px;width:8px;height:8px;background:#444674;border-radius:50%;"></div>
<div class="t" style="left:992.30px;top:916.54px;font-size:12px;color:#301A38;letter-spacing:-0.02px;">user_misery<span style="margin:0 1.3px">(</span>300<span style="margin:0 1.3px">)</span></div>
<div class="t" style="right:672.60px;top:948.94px;font-size:12px;color:#80708F;letter-spacing:0.2px;">0.35</div>
<div class="t" style="right:672.60px;top:987.54px;font-size:12px;color:#80708F;letter-spacing:0.2px;">0.3</div>
<div class="t" style="right:672.60px;top:1026.14px;font-size:12px;color:#80708F;letter-spacing:0.2px;">0.25</div>
<div class="t" style="right:672.60px;top:1064.74px;font-size:12px;color:#80708F;letter-spacing:0.2px;">0.2</div>
<div class="t" style="right:672.60px;top:1103.34px;font-size:12px;color:#80708F;letter-spacing:0.2px;">0.15</div>
<div class="t" style="right:672.60px;top:1141.94px;font-size:12px;color:#80708F;letter-spacing:0.2px;">0.1</div>
<div class="t" style="right:672.60px;top:1180.54px;font-size:12px;color:#80708F;letter-spacing:0.2px;">0.05</div>
<div class="t" style="right:672.60px;top:1219.14px;font-size:12px;color:#80708F;letter-spacing:0.2px;">0</div>
<div class="t" style="left:763.50px;width:600px;text-align:center;top:1237.24px;font-size:12px;color:#80708F;letter-spacing:0.2px;">Mar 31 12:00 AM</div>
<div class="t" style="left:851.50px;width:600px;text-align:center;top:1237.24px;font-size:12px;color:#80708F;letter-spacing:0.2px;">Apr 1 12:00 AM</div>
<div class="t" style="left:1026.10px;width:600px;text-align:center;top:1237.24px;font-size:12px;color:#80708F;letter-spacing:0.2px;">Apr 3 12:00 AM</div>
<div class="t" style="left:1201.30px;width:600px;text-align:center;top:1237.24px;font-size:12px;color:#80708F;letter-spacing:0.2px;">Apr 5 12:00 AM</div>
<svg style="position:absolute;left:0px;top:0px;pointer-events:none;" width="1680" height="1383" viewBox="0 0 1680 1383"><path d="M1015.70 954.80 H1628.80" stroke="#F5F4F7" stroke-width="1"/><path d="M1015.70 993.40 H1628.80" stroke="#F5F4F7" stroke-width="1"/><path d="M1015.70 1032.00 H1628.80" stroke="#F5F4F7" stroke-width="1"/><path d="M1015.70 1070.60 H1628.80" stroke="#F5F4F7" stroke-width="1"/><path d="M1015.70 1109.20 H1628.80" stroke="#F5F4F7" stroke-width="1"/><path d="M1015.70 1147.80 H1628.80" stroke="#F5F4F7" stroke-width="1"/><path d="M1015.70 1186.40 H1628.80" stroke="#F5F4F7" stroke-width="1"/><path d="M1015.70 1225.00 H1628.80" stroke="#80708F" stroke-width="1"/><path d="M1063.50 1225.00 V1230.00" stroke="#80708F" stroke-width="1"/><path d="M1151.50 1225.00 V1230.00" stroke="#80708F" stroke-width="1"/><path d="M1326.10 1225.00 V1230.00" stroke="#80708F" stroke-width="1"/><path d="M1501.30 1225.00 V1230.00" stroke="#80708F" stroke-width="1"/><path d="M1015.75 1034.46 L1017.88 1030.36 L1020.67 1036.92 L1023.13 1043.49 L1025.59 1045.13 L1028.06 1047.59 L1029.70 1049.24 L1032.16 1058.26 L1035.44 1068.11 L1037.08 1063.19 L1039.55 1046.77 L1042.01 1042.67 L1043.65 1043.49 L1045.29 1041.03 L1046.93 1031.18 L1050.22 1038.57 L1051.86 1030.36 L1053.99 1014.76 L1055.96 1021.33 L1059.24 1005.74 L1061.71 997.53 L1063.35 979.47 L1064.99 982.75 L1066.63 980.29 L1069.09 981.93 L1072.38 993.42 L1074.02 1000.81 L1076.15 1016.41 L1080.58 1009.02 L1082.23 1001.63 L1085.51 995.89 L1087.15 1009.02 L1089.61 1000.81 L1092.90 1008.20 L1094.54 1009.02 L1096.18 1018.87 L1097.82 1040.21 L1099.95 1047.59 L1101.92 1030.36 L1103.57 1037.74 L1105.21 1036.10 L1107.18 1044.31 L1109.31 1045.13 L1110.95 1100.12 L1112.59 1069.75 L1115.06 1068.93 L1118.34 1070.57 L1119.98 1072.22 L1122.44 1070.57 L1124.08 1069.75 L1126.55 1059.90 L1129.01 1048.41 L1130.65 1050.06 L1132.78 1033.64 L1134.75 1036.92 L1138.04 1030.36 L1141.32 1029.54 L1142.96 1017.23 L1146.24 1002.45 L1148.71 981.11 L1150.68 975.37 L1152.81 984.40 L1154.45 977.83 L1156.09 991.78 L1158.56 994.24 L1161.02 1004.09 L1164.30 1023.79 L1168.40 1016.41 L1170.87 1010.66 L1172.51 1019.69 L1174.97 1008.20 L1176.61 1009.02 L1178.25 1014.76 L1181.54 1039.39 L1184.82 1037.74 L1187.28 1042.67 L1191.39 1048.41 L1193.03 1044.31 L1194.67 1055.80 L1196.31 1056.62 L1198.77 1065.65 L1200.41 1065.65 L1203.70 1076.32 L1205.34 1073.04 L1207.80 1091.09 L1209.44 1096.02 L1211.08 1092.73 L1212.72 1095.20 L1214.86 1091.09 L1216.83 1104.23 L1219.29 1089.45 L1221.75 1085.35 L1223.39 1086.99 L1225.86 1079.60 L1227.83 1062.37 L1229.96 1077.14 L1232.42 1062.37 L1234.89 1041.85 L1237.35 1036.92 L1238.99 1029.54 L1240.63 1036.92 L1242.27 1022.97 L1243.91 1030.36 L1246.38 1025.43 L1248.02 1045.95 L1249.66 1043.49 L1251.30 1062.37 L1252.94 1062.37 L1255.40 1058.26 L1257.54 1077.96 L1259.51 1078.78 L1262.79 1064.83 L1266.07 1056.62 L1268.54 1074.68 L1271.82 1064.01 L1274.28 1067.29 L1277.56 1074.68 L1280.85 1078.78 L1282.49 1066.47 L1284.13 1081.24 L1285.77 1084.53 L1288.23 1093.56 L1291.52 1102.58 L1293.16 1091.09 L1295.62 1099.30 L1297.26 1115.72 L1298.90 1108.33 L1300.87 1112.43 L1303.01 1110.79 L1305.47 1118.18 L1307.93 1109.15 L1311.21 1100.94 L1315.32 1079.60 L1316.96 1076.32 L1318.60 1062.37 L1320.24 1061.55 L1324.35 1048.41 L1324.43 1049.24 L1326.57 1049.24 L1328.21 1032.00 L1329.85 1032.00 L1331.49 1025.43 L1333.46 1040.21 L1335.59 1050.06 L1337.56 1054.16 L1338.88 1044.31 L1340.85 1066.47 L1342.98 1066.47 L1344.62 1069.75 L1346.26 1074.68 L1347.91 1067.29 L1349.88 1078.78 L1352.01 1077.96 L1353.65 1065.65 L1356.93 1092.73 L1359.40 1090.27 L1362.68 1087.81 L1365.14 1088.63 L1367.60 1086.17 L1370.07 1080.42 L1372.20 1078.78 L1373.84 1090.27 L1375.81 1095.20 L1379.09 1095.20 L1380.74 1100.12 L1383.20 1087.81 L1384.84 1082.89 L1386.48 1086.99 L1388.12 1073.04 L1390.26 1072.22 L1393.05 1056.62 L1395.51 1041.85 L1397.15 1037.74 L1399.28 1047.59 L1401.25 1041.85 L1402.90 1043.49 L1404.54 1034.46 L1406.67 1029.54 L1409.46 1014.76 L1411.92 997.53 L1413.89 972.08 L1415.54 979.47 L1418.49 978.65 L1420.95 981.93 L1424.24 1001.63 L1428.34 1007.38 L1430.31 1003.27 L1432.44 992.60 L1434.08 991.78 L1436.05 986.86 L1438.19 990.14 L1440.65 991.78 L1442.78 999.17 L1444.75 1013.94 L1446.40 1015.58 L1450.50 1024.61 L1452.96 1019.69 L1455.42 1023.79 L1457.89 1032.00 L1459.86 1027.07 L1461.50 1029.54 L1463.30 1041.85 L1465.27 1043.49 L1466.91 1068.11 L1469.05 1059.90 L1471.02 1066.47 L1472.66 1068.11 L1474.30 1112.43 L1477.91 1064.83 L1481.69 1043.49 L1483.33 1043.49 L1484.97 1035.28 L1487.43 1032.00 L1490.72 1026.25 L1492.36 1016.41 L1494.33 1014.76 L1496.46 1006.56 L1498.92 987.68 L1501.39 968.80 L1503.85 969.62 L1506.31 978.65 L1510.41 983.58 L1512.06 994.24 L1516.16 1004.09 L1518.29 994.24 L1520.26 995.89 L1521.90 994.24 L1523.55 984.40 L1524.86 986.86 L1526.83 981.11 L1530.60 1007.38 L1533.39 1010.66 L1535.86 1020.51 L1538.32 1014.76 L1539.96 1023.79 L1541.60 1021.33 L1544.06 1027.90 L1545.71 1022.15 L1547.35 1032.00 L1549.81 1029.54 L1552.27 1029.54 L1554.73 1037.74 L1556.38 1050.06 L1558.84 1054.98 L1559.99 1076.32 L1562.94 1056.62 L1565.40 1054.16 L1567.05 1038.57 L1569.51 1034.46 L1571.15 1023.79 L1572.79 1021.33 L1574.43 1028.72 L1577.72 1014.76 L1580.18 1014.76 L1583.46 994.24 L1585.10 975.37 L1586.74 976.19 L1589.21 969.62 L1591.18 966.34 L1593.31 958.95 L1594.95 959.77 L1597.41 979.47 L1599.88 990.96 L1602.01 1004.09 L1604.80 999.17 L1608.08 991.78 L1610.54 990.14 L1613.01 996.71 L1615.47 995.07 L1617.93 1000.81 L1619.57 1015.58 L1621.21 1011.48 L1622.86 1015.58 L1625.32 1014.76 L1628.60 1018.05" stroke="#444674" fill="none" stroke-width="1.9" stroke-linejoin="round"/></svg>
<div style="position:absolute;left:220px;top:1290px;width:1460px;height:93px;background:#FAF9FB;border-top:1px solid #DBD6E1;"></div>
<div class="t" style="left:250.60px;top:1328.96px;font-size:16px;color:#80708F;letter-spacing:0.3px;">Privacy Policy</div>
<div class="t" style="left:369.80px;top:1328.96px;font-size:16px;color:#80708F;letter-spacing:0.3px;">Terms of Use</div>
<div class="t" style="right:29.00px;top:1328.96px;font-size:16px;color:#80708F;letter-spacing:0.3px;">Contribute</div>
<div class="t" style="right:124.50px;top:1328.96px;font-size:16px;color:#80708F;letter-spacing:0.3px;">Docs</div>
<div class="t" style="right:177.90px;top:1328.96px;font-size:16px;color:#80708F;letter-spacing:0.3px;">API</div>
<svg style="position:absolute;left:928px;top:1318px;" width="45" height="37" viewBox="0 0 2109 1734"><path d="M1500 1510 L1650 1510 Q1770 1500 1715 1395 L1110 310 Q1030 190 950 310 L790 600 Q1290 900 1300 1510 L1040 1510 Q1020 1050 660 800 L530 1070 Q790 1250 790 1510 L400 1510 Q290 1490 345 1385 L430 1235" fill="none" stroke="#80708F" stroke-width="112" stroke-linejoin="round"/></svg>
</body></html>
